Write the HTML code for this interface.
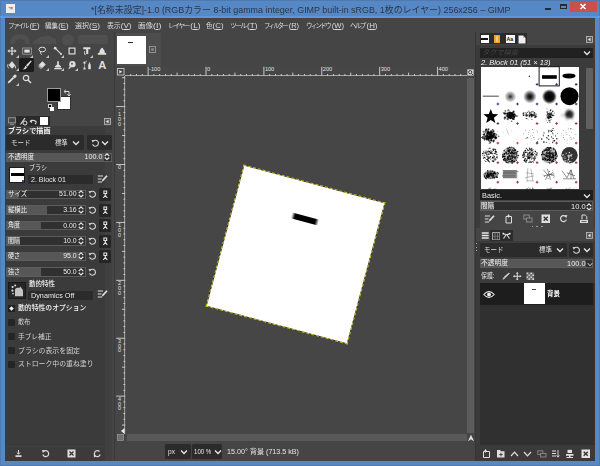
<!DOCTYPE html>
<html lang="ja"><head><meta charset="utf-8"><title>GIMP</title>
<style>
html,body{margin:0;padding:0;}
body{width:600px;height:466px;overflow:hidden;position:relative;background:#5688c5;font-family:"Liberation Sans","Noto Sans CJK JP",sans-serif;}
body>div,body>svg{position:absolute;}
.t{font-family:"Liberation Sans","Noto Sans CJK JP",sans-serif;}
u{text-decoration:underline;text-underline-offset:0.5px;text-decoration-thickness:0.6px;}
</style></head><body>
<div style="left:5.8px;top:4px;width:9.4px;height:9.2px;background:#f2f0ee;"></div>
<svg style="left:6px;top:4px;" width="9" height="9" viewBox="0 0 9 9"><path d="M2 3 Q4.5 2 7 4 L6 6 Q4 5 2 3Z" fill="#b0a4a0"/><circle cx="6" cy="3.6" r="0.8" fill="#d06a5a"/></svg>
<div class="t" style="left:90.5px;top:3.84px;font-size:8.8px;line-height:12.32px;color:#2c3446;font-weight:400;white-space:nowrap;transform:scaleX(1.014);transform-origin:left center;">*[名称未設定]-1.0 (RGBカラー 8-bit gamma integer, GIMP built-in sRGB, 1枚のレイヤー) 256x256 – GIMP</div>
<div style="left:545px;top:8px;width:6px;height:1.6px;background:#2a2a2a;"></div>
<div style="left:559.5px;top:3.5px;width:7px;height:5.5px;background:transparent;border:1px solid #2a2a2a;border-top-width:2px;box-sizing:border-box;"></div>
<div style="left:570px;top:0px;width:26.5px;height:12px;background:#c9504d;"></div>
<svg style="left:578px;top:1.5px;" width="10" height="9" viewBox="0 0 10 9"><path d="M2.5 2 L7.5 7 M7.5 2 L2.5 7" stroke="#fff" stroke-width="1.5"/></svg>
<div style="left:0px;top:0px;width:600px;height:466px;background:transparent;border:1px solid #5079b0;box-sizing:border-box;"></div>
<div style="left:0px;top:16.4px;width:600px;height:1.2px;background:#5b97dc;"></div>
<div style="left:4.6px;top:17.6px;width:590.6px;height:443.6px;background:#3a3c42;"></div>
<div style="left:5px;top:18px;width:590px;height:443px;background:#454545;"></div>
<div style="left:5px;top:18px;width:590px;height:14px;background:#454545;"></div>
<div class="t" style="left:7.5px;top:20.07px;font-size:7.9px;line-height:11.06px;color:#dcdcdc;font-weight:400;white-space:nowrap;transform:scaleX(0.997);transform-origin:left center;"><span style="font-size:6.7px;letter-spacing:-1.75px;margin-right:1.75px;">ファイル</span><span style="font-size:7.9px;">(<u>F</u>)</span></div>
<div class="t" style="left:45px;top:20.07px;font-size:7.9px;line-height:11.06px;color:#dcdcdc;font-weight:400;white-space:nowrap;transform:scaleX(0.982);transform-origin:left center;"><span style="font-size:6.7px;">編集</span><span style="font-size:7.9px;">(<u>E</u>)</span></div>
<div class="t" style="left:75px;top:20.07px;font-size:7.9px;line-height:11.06px;color:#dcdcdc;font-weight:400;white-space:nowrap;transform:scaleX(1.045);transform-origin:left center;"><span style="font-size:6.7px;">選択</span><span style="font-size:7.9px;">(<u>S</u>)</span></div>
<div class="t" style="left:106.5px;top:20.07px;font-size:7.9px;line-height:11.06px;color:#dcdcdc;font-weight:400;white-space:nowrap;transform:scaleX(1.024);transform-origin:left center;"><span style="font-size:6.7px;">表示</span><span style="font-size:7.9px;">(<u>V</u>)</span></div>
<div class="t" style="left:137.5px;top:20.07px;font-size:7.9px;line-height:11.06px;color:#dcdcdc;font-weight:400;white-space:nowrap;transform:scaleX(1.127);transform-origin:left center;"><span style="font-size:6.7px;">画像</span><span style="font-size:7.9px;">(<u>I</u>)</span></div>
<div class="t" style="left:167.5px;top:20.07px;font-size:7.9px;line-height:11.06px;color:#dcdcdc;font-weight:400;white-space:nowrap;transform:scaleX(1.049);transform-origin:left center;"><span style="font-size:6.7px;letter-spacing:-1.75px;margin-right:1.75px;">レイヤー</span><span style="font-size:7.9px;">(<u>L</u>)</span></div>
<div class="t" style="left:206px;top:20.07px;font-size:7.9px;line-height:11.06px;color:#dcdcdc;font-weight:400;white-space:nowrap;transform:scaleX(0.990);transform-origin:left center;"><span style="font-size:6.7px;">色</span><span style="font-size:7.9px;">(<u>C</u>)</span></div>
<div class="t" style="left:230px;top:20.07px;font-size:7.9px;line-height:11.06px;color:#dcdcdc;font-weight:400;white-space:nowrap;transform:scaleX(1.031);transform-origin:left center;"><span style="font-size:6.7px;letter-spacing:-1.75px;margin-right:1.75px;">ツール</span><span style="font-size:7.9px;">(<u>T</u>)</span></div>
<div class="t" style="left:264px;top:20.07px;font-size:7.9px;line-height:11.06px;color:#dcdcdc;font-weight:400;white-space:nowrap;transform:scaleX(0.938);transform-origin:left center;"><span style="font-size:6.7px;letter-spacing:-1.75px;margin-right:1.75px;">フィルター</span><span style="font-size:7.9px;">(<u>R</u>)</span></div>
<div class="t" style="left:306px;top:20.07px;font-size:7.9px;line-height:11.06px;color:#dcdcdc;font-weight:400;white-space:nowrap;transform:scaleX(0.970);transform-origin:left center;"><span style="font-size:6.7px;letter-spacing:-1.75px;margin-right:1.75px;">ウィンドウ</span><span style="font-size:7.9px;">(<u>W</u>)</span></div>
<div class="t" style="left:350px;top:20.07px;font-size:7.9px;line-height:11.06px;color:#dcdcdc;font-weight:400;white-space:nowrap;transform:scaleX(0.998);transform-origin:left center;"><span style="font-size:6.7px;letter-spacing:-1.75px;margin-right:1.75px;">ヘルプ</span><span style="font-size:7.9px;">(<u>H</u>)</span></div>
<svg style="left:8px;top:33px;" width="102" height="12" viewBox="0 0 102 12"><g fill="#4f4f4f"><path d="M2 11 Q2 1 12 1 Q22 1 22 11 L17 11 Q17 6 12 6 Q7 6 7 11Z"/><path d="M24 11 Q30 2 40 3 L48 6 L48 11Z"/><circle cx="40" cy="7" r="4.5"/><circle cx="60" cy="7" r="6"/><rect x="70" y="2" width="30" height="9" rx="2"/></g></svg>
<svg style="left:7.199999999999999px;top:46.3px;" width="10" height="10" viewBox="0 0 12 12"><path d="M6 0.5 L8 3 L6.7 3 L6.7 5.3 L9 5.3 L9 4 L11.5 6 L9 8 L9 6.7 L6.7 6.7 L6.7 9 L8 9 L6 11.5 L4 9 L5.3 9 L5.3 6.7 L3 6.7 L3 8 L0.5 6 L3 4 L3 5.3 L5.3 5.3 L5.3 3 L4 3Z" fill="#dedede"/></svg>
<svg style="left:21.6px;top:46.3px;" width="10" height="10" viewBox="0 0 12 12"><rect x="0.8" y="2.4" width="10.4" height="7.4" fill="none" stroke="#a8a8a8" stroke-width="0.9"/><rect x="2.8" y="4.3" width="6.4" height="3.6" fill="#e4e4e4"/></svg>
<svg style="left:37.2px;top:46.3px;" width="10" height="10" viewBox="0 0 12 12"><ellipse cx="6.3" cy="4.2" rx="4" ry="2.8" fill="none" stroke="#dedede" stroke-width="1.2"/><path d="M4.5 6.5 Q3.5 8.5 5.5 10.5" fill="none" stroke="#dedede" stroke-width="1.1"/></svg>
<svg style="left:52.8px;top:46.3px;" width="10" height="10" viewBox="0 0 12 12"><path d="M2.5 2.5 L9.5 9.5" stroke="#dedede" stroke-width="1.3"/><circle cx="2.6" cy="2.6" r="1.6" fill="#dedede"/><circle cx="9.6" cy="9.6" r="1.2" fill="#dedede"/></svg>
<svg style="left:66.8px;top:46.3px;" width="10" height="10" viewBox="0 0 12 12"><rect x="2.5" y="2.5" width="7" height="7" fill="none" stroke="#dedede" stroke-width="1.4"/></svg>
<svg style="left:82px;top:46.3px;" width="10" height="10" viewBox="0 0 12 12"><path d="M1.5 1.5 H10 V4 H7.5 V9.5 H5 V4 H1.5Z" fill="#dedede"/><path d="M3 6 V10 H5" stroke="#dedede" fill="none" stroke-width="0.9"/></svg>
<svg style="left:97.4px;top:46.3px;" width="10" height="10" viewBox="0 0 12 12"><path d="M1 10.5 H11 V8.5 H9.5 Q9.5 5 7.5 3.5 Q7 1.5 5.5 2.5 Q3 4.5 2.5 8.5 H1Z" fill="#dedede"/></svg>
<svg style="left:7.199999999999999px;top:60.2px;" width="10" height="10" viewBox="0 0 12 12"><path d="M2 6 L6 1.5 L10 6.5 L6 10.5Z" fill="#dedede"/><path d="M9.5 6 Q12 9 10.5 11 Q9 9 9.5 6Z" fill="#dedede"/><path d="M1 5 Q0 8 2 10" stroke="#dedede" fill="none" stroke-width="1"/></svg>
<div style="left:19.400000000000002px;top:58.300000000000004px;width:14.4px;height:13.6px;background:#1c1c1c;border-radius:1.5px;"></div>
<svg style="left:21.6px;top:60.2px;" width="10" height="10" viewBox="0 0 12 12"><path d="M10.6 0.6 L11.6 1.6 L6.6 8 L4.8 6.4Z" fill="#dedede"/><path d="M4.2 6.8 L6.2 8.6 Q5 11.4 0.8 11.4 Q3.2 9.6 4.2 6.8Z" fill="#dedede"/></svg>
<svg style="left:37.2px;top:60.2px;" width="10" height="10" viewBox="0 0 12 12"><path d="M6.5 1.5 L10.5 5.5 L6 10 L2 6Z" fill="#dedede"/><path d="M2 6 L6 10 L4.5 11 L1.5 8Z" fill="#9c9c9c"/></svg>
<svg style="left:52.8px;top:60.2px;" width="10" height="10" viewBox="0 0 12 12"><path d="M5 1.5 H7 V5.5 L9.5 7.5 V9 H2.5 V7.5 L5 5.5Z" fill="#dedede"/><rect x="1.5" y="9.6" width="9" height="1.5" fill="#dedede"/></svg>
<svg style="left:66.8px;top:60.2px;" width="10" height="10" viewBox="0 0 12 12"><circle cx="6.5" cy="5" r="3.8" fill="#dedede"/><path d="M3.5 7 L1.5 11 L4.5 9.5Z" fill="#dedede"/><circle cx="6" cy="4.5" r="1.2" fill="#555"/></svg>
<svg style="left:82px;top:60.2px;" width="10" height="10" viewBox="0 0 12 12"><path d="M3 10.5 V3 Q3 1.5 6 1.5" fill="none" stroke="#dedede" stroke-width="1" stroke-dasharray="1.5 1"/><rect x="1.8" y="9" width="2.4" height="2.4" fill="#dedede"/><rect x="1.8" y="2" width="2.4" height="2.4" fill="#dedede"/><path d="M7.5 5 H10.5 V11 H7.5Z M8.3 5 V3 H9.7 V5" fill="#dedede"/></svg>
<div class="t" style="left:96.4px;top:56.7px;width:12px;text-align:center;font-size:11.2px;line-height:17px;color:#dedede;font-weight:700;">A</div>
<svg style="left:7.199999999999999px;top:74.3px;" width="10" height="10" viewBox="0 0 12 12"><path d="M9.3 0.5 Q12 0.6 11.3 3.2 L9.2 5.4 L6.8 3Z" fill="#dedede"/><path d="M7 3.6 L8.6 5.2 L3.2 10.6 L0.8 11.4 L1.6 9Z" fill="#dedede"/></svg>
<svg style="left:21.6px;top:74.3px;" width="10" height="10" viewBox="0 0 12 12"><circle cx="4.8" cy="4.8" r="3.2" fill="none" stroke="#dedede" stroke-width="1.4"/><path d="M7.2 7.2 L10.8 10.8" stroke="#dedede" stroke-width="1.8"/></svg>
<svg style="left:15.6px;top:54.5px;" width="3" height="3" viewBox="0 0 3 3"><path d="M3 0 V3 H0Z" fill="#c4c4c4"/></svg>
<svg style="left:30.0px;top:54.5px;" width="3" height="3" viewBox="0 0 3 3"><path d="M3 0 V3 H0Z" fill="#c4c4c4"/></svg>
<svg style="left:45.6px;top:54.5px;" width="3" height="3" viewBox="0 0 3 3"><path d="M3 0 V3 H0Z" fill="#c4c4c4"/></svg>
<svg style="left:61.199999999999996px;top:54.5px;" width="3" height="3" viewBox="0 0 3 3"><path d="M3 0 V3 H0Z" fill="#c4c4c4"/></svg>
<svg style="left:90.4px;top:54.5px;" width="3" height="3" viewBox="0 0 3 3"><path d="M3 0 V3 H0Z" fill="#c4c4c4"/></svg>
<svg style="left:15.6px;top:68.4px;" width="3" height="3" viewBox="0 0 3 3"><path d="M3 0 V3 H0Z" fill="#c4c4c4"/></svg>
<svg style="left:45.6px;top:68.4px;" width="3" height="3" viewBox="0 0 3 3"><path d="M3 0 V3 H0Z" fill="#c4c4c4"/></svg>
<svg style="left:61.199999999999996px;top:68.4px;" width="3" height="3" viewBox="0 0 3 3"><path d="M3 0 V3 H0Z" fill="#c4c4c4"/></svg>
<svg style="left:75.2px;top:68.4px;" width="3" height="3" viewBox="0 0 3 3"><path d="M3 0 V3 H0Z" fill="#c4c4c4"/></svg>
<svg style="left:15.6px;top:82.5px;" width="3" height="3" viewBox="0 0 3 3"><path d="M3 0 V3 H0Z" fill="#c4c4c4"/></svg>
<div style="left:56.6px;top:96.3px;width:14px;height:13.6px;background:#ffffff;border:1px solid #2e2e2e;box-sizing:border-box;"></div>
<div style="left:47.4px;top:88.3px;width:14px;height:13.6px;background:#000;border:1px solid #9a9a9a;box-sizing:border-box;"></div>
<svg style="left:63px;top:89px;" width="8" height="8" viewBox="0 0 8 8"><path d="M1 2.5 H6 V7 M2.8 0.8 L1 2.5 L2.8 4.2 M4.3 5.3 L6 7 L7.7 5.3" fill="none" stroke="#d8d8d8" stroke-width="1"/></svg>
<div style="left:47.5px;top:104px;width:4px;height:4px;background:#000;border:0.6px solid #ccc;box-sizing:border-box;"></div>
<div style="left:50px;top:106.5px;width:4px;height:4px;background:#fff;"></div>
<div style="left:5px;top:126px;width:100px;height:335px;background:#3b3b3b;"></div>
<div style="left:105px;top:126px;width:6.8px;height:335px;background:#404040;"></div>
<div style="left:16px;top:116px;width:33.6px;height:10px;background:#2a2a2a;"></div>
<svg style="left:7.8px;top:117px;" width="8" height="8" viewBox="0 0 8 8"><rect x="0.6" y="0.8" width="6.8" height="5" fill="none" stroke="#9c9c9c" stroke-width="0.9"/><path d="M2 7.3 H6" stroke="#9c9c9c" stroke-width="0.9"/></svg>
<svg style="left:18.5px;top:116.5px;" width="9" height="9" viewBox="0 0 9 9"><path d="M1.5 7.5 L6 1" stroke="#e0e0e0" stroke-width="1.2"/><circle cx="6" cy="6" r="2" fill="none" stroke="#e0e0e0" stroke-width="1"/></svg>
<svg style="left:28.5px;top:117px;" width="8" height="8" viewBox="0 0 8 8"><path d="M1.2 4.2 Q4 2.5 7 4.5 Q7.5 6 6 7" fill="none" stroke="#d8d8d8" stroke-width="1.1"/><path d="M0.5 4.4 L3 2.6 L3 6Z" fill="#d8d8d8"/></svg>
<div style="left:40px;top:117.2px;width:8.4px;height:8px;background:#fff;"></div>
<svg style="left:104px;top:117.5px;" width="7" height="7" viewBox="0 0 7 7"><rect x="0.5" y="0.5" width="6" height="6" fill="#5a5a5a" stroke="#bdbdbd" stroke-width="0.8"/><path d="M4.5 1.8 V5.2 L2 3.5Z" fill="#eee"/></svg>
<div class="t" style="left:7.5px;top:125.60px;font-size:7px;line-height:9.80px;color:#f0f0f0;font-weight:700;white-space:nowrap;transform:scaleX(1.015);transform-origin:left center;">ブラシで描画</div>
<div style="left:6px;top:135px;width:77.5px;height:14.5px;background:#2b2b2b;border-radius:1.5px;"></div>
<div class="t" style="left:10.5px;top:137.60px;font-size:7px;line-height:9.80px;color:#dcdcdc;font-weight:400;white-space:nowrap;transform:scaleX(0.929);transform-origin:left center;">モード</div>
<div class="t" style="left:55px;top:137.60px;font-size:7px;line-height:9.80px;color:#e0e0e0;font-weight:400;white-space:nowrap;transform:scaleX(0.893);transform-origin:left center;">標準</div>
<svg style="left:72px;top:139.5px;" width="8" height="6" viewBox="0 0 8 6"><path d="M1 1.5 L4 4.5 L7 1.5" fill="none" stroke="#e8e8e8" stroke-width="1.3"/></svg>
<div style="left:87px;top:135px;width:24.5px;height:14.5px;background:#2b2b2b;border-radius:1.5px;"></div>
<svg style="left:90.5px;top:138.5px;" width="8" height="8" viewBox="0 0 8 8"><path d="M2.2 2.2 A3 3 0 1 1 1.6 5.2" fill="none" stroke="#d4d4d4" stroke-width="1.1"/><path d="M0.6 1 L3.6 1.2 L1.8 3.8Z" fill="#d4d4d4"/></svg>
<svg style="left:100.5px;top:139.5px;" width="8" height="6" viewBox="0 0 8 6"><path d="M1 1.5 L4 4.5 L7 1.5" fill="none" stroke="#e8e8e8" stroke-width="1.3"/></svg>
<div style="left:6px;top:152.5px;width:105.5px;height:9px;background:#303030;border:1px solid #5c5c5c;box-sizing:border-box;"></div>
<div style="left:6.8px;top:153.3px;width:97.5px;height:7.4px;background:#575757;"></div>
<div class="t" style="left:8px;top:151.90px;font-size:7px;line-height:9.80px;color:#f0f0f0;font-weight:400;white-space:nowrap;transform:scaleX(0.929);transform-origin:left center;">不透明度</div>
<div class="t" style="right:497.5px;top:152.10px;font-size:7px;line-height:9.80px;color:#ececec;font-weight:400;white-space:nowrap;transform:scaleX(1.027);transform-origin:right center;">100.0</div>
<svg style="left:103.9px;top:153.3px;" width="6" height="7.4" viewBox="0 0 6 7.4"><path d="M0.7 2.96 L3 0.9 L5.3 2.96 M0.7 4.44 L3 6.50 L5.3 4.44" fill="none" stroke="#e0e0e0" stroke-width="1.25"/></svg>
<div style="left:8.5px;top:166.5px;width:16.8px;height:16.8px;background:#fff;border:1.4px solid #1c1c1c;box-sizing:border-box;"></div>
<div style="left:10.5px;top:173.2px;width:13px;height:3.2px;background:#000;"></div>
<div style="left:21.5px;top:180px;width:2.2px;height:2.2px;background:#3050a0;"></div>
<div class="t" style="left:29px;top:163.30px;font-size:7px;line-height:9.80px;color:#e8e8e8;font-weight:400;white-space:nowrap;transform:scaleX(0.862);transform-origin:left center;">ブラシ</div>
<div style="left:28px;top:174.5px;width:64.5px;height:9.5px;background:#2b2b2b;"></div>
<div class="t" style="left:31px;top:174.60px;font-size:7px;line-height:9.80px;color:#e8e8e8;font-weight:400;white-space:nowrap;transform:scaleX(1.010);transform-origin:left center;">2. Block 01</div>
<svg style="left:97px;top:173.5px;" width="11" height="10" viewBox="0 0 11 10"><path d="M0.8 2 H6 M0.8 5 H4.5 M0.8 8 H5" stroke="#e0e0e0" stroke-width="1.2"/><path d="M4.8 7.8 L5.4 5.6 L9.4 1.2 L10.6 2.3 L6.6 6.8Z" fill="#e0e0e0"/></svg>
<div style="left:6px;top:189.5px;width:79.5px;height:9.5px;background:#303030;border:1px solid #5c5c5c;box-sizing:border-box;"></div>
<div style="left:6.8px;top:190.3px;width:11.7px;height:7.9px;background:#575757;"></div>
<div class="t" style="left:8px;top:189.15px;font-size:7px;line-height:9.80px;color:#f0f0f0;font-weight:400;white-space:nowrap;transform:scaleX(0.933);transform-origin:left center;">サイズ</div>
<div class="t" style="right:523.5px;top:189.35px;font-size:7px;line-height:9.80px;color:#ececec;font-weight:400;white-space:nowrap;transform:scaleX(0.993);transform-origin:right center;">51.00</div>
<svg style="left:77.9px;top:190.3px;" width="6" height="7.9" viewBox="0 0 6 7.9"><path d="M0.7 3.16 L3 0.9 L5.3 3.16 M0.7 4.74 L3 7.00 L5.3 4.74" fill="none" stroke="#e0e0e0" stroke-width="1.25"/></svg>
<svg style="left:88px;top:190.3px;" width="8" height="8" viewBox="0 0 8 8"><path d="M2.2 2.2 A3 3 0 1 1 1.6 5.2" fill="none" stroke="#d4d4d4" stroke-width="1.1"/><path d="M0.6 1 L3.6 1.2 L1.8 3.8Z" fill="#d4d4d4"/></svg>
<div style="left:98.8px;top:187.9px;width:12.5px;height:13px;background:#252525;border-radius:1.5px;"></div>
<svg style="left:101.6px;top:189.9px;" width="6.6" height="8.6" viewBox="0 0 8 10"><path d="M2.3 1 H5.7 V4 H2.3Z" fill="none" stroke="#e4e4e4" stroke-width="1.3"/><path d="M4 4 V6.5 M1.6 9.5 L4 6 L6.4 9.5" fill="none" stroke="#e4e4e4" stroke-width="1.3"/></svg>
<div style="left:6px;top:205.2px;width:79.5px;height:9.5px;background:#303030;border:1px solid #5c5c5c;box-sizing:border-box;"></div>
<div style="left:6.8px;top:206.0px;width:40.2px;height:7.9px;background:#575757;"></div>
<div class="t" style="left:8px;top:204.85px;font-size:7px;line-height:9.80px;color:#f0f0f0;font-weight:400;white-space:nowrap;transform:scaleX(0.905);transform-origin:left center;">縦横比</div>
<div class="t" style="right:523.5px;top:205.05px;font-size:7px;line-height:9.80px;color:#ececec;font-weight:400;white-space:nowrap;transform:scaleX(0.983);transform-origin:right center;">3.16</div>
<svg style="left:77.9px;top:206.0px;" width="6" height="7.9" viewBox="0 0 6 7.9"><path d="M0.7 3.16 L3 0.9 L5.3 3.16 M0.7 4.74 L3 7.00 L5.3 4.74" fill="none" stroke="#e0e0e0" stroke-width="1.25"/></svg>
<svg style="left:88px;top:206.0px;" width="8" height="8" viewBox="0 0 8 8"><path d="M2.2 2.2 A3 3 0 1 1 1.6 5.2" fill="none" stroke="#d4d4d4" stroke-width="1.1"/><path d="M0.6 1 L3.6 1.2 L1.8 3.8Z" fill="#d4d4d4"/></svg>
<div style="left:98.8px;top:203.6px;width:12.5px;height:13px;background:#252525;border-radius:1.5px;"></div>
<svg style="left:101.6px;top:205.6px;" width="6.6" height="8.6" viewBox="0 0 8 10"><path d="M2.3 1 H5.7 V4 H2.3Z" fill="none" stroke="#e4e4e4" stroke-width="1.3"/><path d="M4 4 V6.5 M1.6 9.5 L4 6 L6.4 9.5" fill="none" stroke="#e4e4e4" stroke-width="1.3"/></svg>
<div style="left:6px;top:220.8px;width:79.5px;height:9.5px;background:#303030;border:1px solid #5c5c5c;box-sizing:border-box;"></div>
<div style="left:6.8px;top:221.60000000000002px;width:34.2px;height:7.9px;background:#575757;"></div>
<div class="t" style="left:8px;top:220.45px;font-size:7px;line-height:9.80px;color:#f0f0f0;font-weight:400;white-space:nowrap;transform:scaleX(0.857);transform-origin:left center;">角度</div>
<div class="t" style="right:523.5px;top:220.65px;font-size:7px;line-height:9.80px;color:#ececec;font-weight:400;white-space:nowrap;transform:scaleX(0.983);transform-origin:right center;">0.00</div>
<svg style="left:77.9px;top:221.60000000000002px;" width="6" height="7.9" viewBox="0 0 6 7.9"><path d="M0.7 3.16 L3 0.9 L5.3 3.16 M0.7 4.74 L3 7.00 L5.3 4.74" fill="none" stroke="#e0e0e0" stroke-width="1.25"/></svg>
<svg style="left:88px;top:221.60000000000002px;" width="8" height="8" viewBox="0 0 8 8"><path d="M2.2 2.2 A3 3 0 1 1 1.6 5.2" fill="none" stroke="#d4d4d4" stroke-width="1.1"/><path d="M0.6 1 L3.6 1.2 L1.8 3.8Z" fill="#d4d4d4"/></svg>
<div style="left:98.8px;top:219.20000000000002px;width:12.5px;height:13px;background:#252525;border-radius:1.5px;"></div>
<svg style="left:101.6px;top:221.20000000000002px;" width="6.6" height="8.6" viewBox="0 0 8 10"><path d="M2.3 1 H5.7 V4 H2.3Z" fill="none" stroke="#e4e4e4" stroke-width="1.3"/><path d="M4 4 V6.5 M1.6 9.5 L4 6 L6.4 9.5" fill="none" stroke="#e4e4e4" stroke-width="1.3"/></svg>
<div style="left:6px;top:236.2px;width:79.5px;height:9.5px;background:#303030;border:1px solid #5c5c5c;box-sizing:border-box;"></div>
<div style="left:6.8px;top:237.0px;width:13.7px;height:7.9px;background:#575757;"></div>
<div class="t" style="left:8px;top:235.85px;font-size:7px;line-height:9.80px;color:#f0f0f0;font-weight:400;white-space:nowrap;transform:scaleX(0.857);transform-origin:left center;">間隔</div>
<div class="t" style="right:523.5px;top:236.05px;font-size:7px;line-height:9.80px;color:#ececec;font-weight:400;white-space:nowrap;transform:scaleX(0.983);transform-origin:right center;">10.0</div>
<svg style="left:77.9px;top:237.0px;" width="6" height="7.9" viewBox="0 0 6 7.9"><path d="M0.7 3.16 L3 0.9 L5.3 3.16 M0.7 4.74 L3 7.00 L5.3 4.74" fill="none" stroke="#e0e0e0" stroke-width="1.25"/></svg>
<svg style="left:88px;top:237.0px;" width="8" height="8" viewBox="0 0 8 8"><path d="M2.2 2.2 A3 3 0 1 1 1.6 5.2" fill="none" stroke="#d4d4d4" stroke-width="1.1"/><path d="M0.6 1 L3.6 1.2 L1.8 3.8Z" fill="#d4d4d4"/></svg>
<div style="left:98.8px;top:234.6px;width:12.5px;height:13px;background:#252525;border-radius:1.5px;"></div>
<svg style="left:101.6px;top:236.6px;" width="6.6" height="8.6" viewBox="0 0 8 10"><path d="M2.3 1 H5.7 V4 H2.3Z" fill="none" stroke="#e4e4e4" stroke-width="1.3"/><path d="M4 4 V6.5 M1.6 9.5 L4 6 L6.4 9.5" fill="none" stroke="#e4e4e4" stroke-width="1.3"/></svg>
<div style="left:6px;top:251.6px;width:79.5px;height:9.5px;background:#303030;border:1px solid #5c5c5c;box-sizing:border-box;"></div>
<div style="left:6.8px;top:252.4px;width:73.7px;height:7.9px;background:#575757;"></div>
<div class="t" style="left:8px;top:251.25px;font-size:7px;line-height:9.80px;color:#f0f0f0;font-weight:400;white-space:nowrap;transform:scaleX(0.857);transform-origin:left center;">硬さ</div>
<div class="t" style="right:523.5px;top:251.45px;font-size:7px;line-height:9.80px;color:#ececec;font-weight:400;white-space:nowrap;transform:scaleX(0.983);transform-origin:right center;">95.0</div>
<svg style="left:77.9px;top:252.4px;" width="6" height="7.9" viewBox="0 0 6 7.9"><path d="M0.7 3.16 L3 0.9 L5.3 3.16 M0.7 4.74 L3 7.00 L5.3 4.74" fill="none" stroke="#e0e0e0" stroke-width="1.25"/></svg>
<svg style="left:88px;top:252.4px;" width="8" height="8" viewBox="0 0 8 8"><path d="M2.2 2.2 A3 3 0 1 1 1.6 5.2" fill="none" stroke="#d4d4d4" stroke-width="1.1"/><path d="M0.6 1 L3.6 1.2 L1.8 3.8Z" fill="#d4d4d4"/></svg>
<div style="left:98.8px;top:250.0px;width:12.5px;height:13px;background:#252525;border-radius:1.5px;"></div>
<svg style="left:101.6px;top:252.0px;" width="6.6" height="8.6" viewBox="0 0 8 10"><path d="M2.3 1 H5.7 V4 H2.3Z" fill="none" stroke="#e4e4e4" stroke-width="1.3"/><path d="M4 4 V6.5 M1.6 9.5 L4 6 L6.4 9.5" fill="none" stroke="#e4e4e4" stroke-width="1.3"/></svg>
<div style="left:6px;top:267px;width:79.5px;height:9.5px;background:#303030;border:1px solid #5c5c5c;box-sizing:border-box;"></div>
<div style="left:6.8px;top:267.8px;width:34.2px;height:7.9px;background:#575757;"></div>
<div class="t" style="left:8px;top:266.65px;font-size:7px;line-height:9.80px;color:#f0f0f0;font-weight:400;white-space:nowrap;transform:scaleX(0.857);transform-origin:left center;">強さ</div>
<div class="t" style="right:523.5px;top:266.85px;font-size:7px;line-height:9.80px;color:#ececec;font-weight:400;white-space:nowrap;transform:scaleX(0.983);transform-origin:right center;">50.0</div>
<svg style="left:77.9px;top:267.8px;" width="6" height="7.9" viewBox="0 0 6 7.9"><path d="M0.7 3.16 L3 0.9 L5.3 3.16 M0.7 4.74 L3 7.00 L5.3 4.74" fill="none" stroke="#e0e0e0" stroke-width="1.25"/></svg>
<svg style="left:88px;top:267.8px;" width="8" height="8" viewBox="0 0 8 8"><path d="M2.2 2.2 A3 3 0 1 1 1.6 5.2" fill="none" stroke="#d4d4d4" stroke-width="1.1"/><path d="M0.6 1 L3.6 1.2 L1.8 3.8Z" fill="#d4d4d4"/></svg>
<div style="left:8.2px;top:281.6px;width:18px;height:17.7px;background:#262626;border:1px solid #1a1a1a;box-sizing:border-box;"></div>
<svg style="left:9.5px;top:283px;" width="16" height="15" viewBox="0 0 16 15"><path d="M5 7.5 Q5 4.8 7.5 4.8 L9.5 4.8 L10.8 3.4 L11.4 5.2 Q13 6 13 8 V13.2 H5Z" fill="#c4c4c4"/><circle cx="2.6" cy="4" r="1.1" fill="#dcdcdc"/><circle cx="5.2" cy="2.4" r="1" fill="#dcdcdc"/><circle cx="2.4" cy="7.6" r="1.1" fill="#dcdcdc"/><circle cx="3" cy="10.6" r="0.9" fill="#c8c8c8"/></svg>
<div class="t" style="left:28.6px;top:279.40px;font-size:7px;line-height:9.80px;color:#f0f0f0;font-weight:500;white-space:nowrap;transform:scaleX(0.929);transform-origin:left center;">動的特性</div>
<div style="left:28px;top:290.5px;width:64.5px;height:9.5px;background:#2b2b2b;"></div>
<div class="t" style="left:30.6px;top:290.60px;font-size:7px;line-height:9.80px;color:#e8e8e8;font-weight:400;white-space:nowrap;transform:scaleX(1.036);transform-origin:left center;">Dynamics Off</div>
<svg style="left:97px;top:288.5px;" width="11" height="10" viewBox="0 0 11 10"><path d="M0.8 2 H6 M0.8 5 H4.5 M0.8 8 H5" stroke="#e0e0e0" stroke-width="1.2"/><path d="M4.8 7.8 L5.4 5.6 L9.4 1.2 L10.6 2.3 L6.6 6.8Z" fill="#e0e0e0"/></svg>
<svg style="left:8px;top:305px;" width="7" height="7" viewBox="0 0 7 7"><rect x="0" y="0" width="7" height="7" fill="#222"/><path d="M3.5 1.2 L5.8 3.5 L3.5 5.8 L1.2 3.5Z" fill="#f4f4f4"/></svg>
<div class="t" style="left:17.6px;top:303.40px;font-size:7px;line-height:9.80px;color:#f4f4f4;font-weight:500;white-space:nowrap;transform:scaleX(0.977);transform-origin:left center;">動的特性のオプション</div>
<div style="left:7.6px;top:318.7px;width:7.2px;height:7.2px;background:#252525;border-radius:1.2px;"></div>
<div class="t" style="left:17.6px;top:317.40px;font-size:7px;line-height:9.80px;color:#d2d2d2;font-weight:400;white-space:nowrap;transform:scaleX(0.886);transform-origin:left center;">散布</div>
<div style="left:7.6px;top:332.79999999999995px;width:7.2px;height:7.2px;background:#252525;border-radius:1.2px;"></div>
<div class="t" style="left:17.6px;top:331.50px;font-size:7px;line-height:9.80px;color:#d2d2d2;font-weight:400;white-space:nowrap;transform:scaleX(0.954);transform-origin:left center;">手ブレ補正</div>
<div style="left:7.6px;top:346.79999999999995px;width:7.2px;height:7.2px;background:#252525;border-radius:1.2px;"></div>
<div class="t" style="left:17.6px;top:345.50px;font-size:7px;line-height:9.80px;color:#d2d2d2;font-weight:400;white-space:nowrap;transform:scaleX(0.986);transform-origin:left center;">ブラシの表示を固定</div>
<div style="left:7.6px;top:360.59999999999997px;width:7.2px;height:7.2px;background:#252525;border-radius:1.2px;"></div>
<div class="t" style="left:17.6px;top:359.30px;font-size:7px;line-height:9.80px;color:#d2d2d2;font-weight:400;white-space:nowrap;transform:scaleX(0.982);transform-origin:left center;">ストローク中の重ね塗り</div>
<div style="left:5px;top:445.5px;width:100px;height:0.8px;background:#404040;"></div>
<svg style="left:14px;top:449px;" width="9" height="9" viewBox="0 0 9 9"><path d="M4.5 1 V5 M2.8 3.5 L4.5 5.2 L6.2 3.5" fill="none" stroke="#d8d8d8" stroke-width="1"/><path d="M1.5 8 H7.5 V6.2 H1.5Z" fill="#d8d8d8"/></svg>
<svg style="left:41px;top:449px;" width="9" height="9" viewBox="0 0 9 9"><path d="M2.5 2.5 A3 3 0 1 1 1.8 5.5" fill="none" stroke="#dcdcdc" stroke-width="1.2"/><path d="M0.8 1 L4 1.4 L2 4Z" fill="#dcdcdc"/></svg>
<svg style="left:66.5px;top:449px;" width="9" height="9" viewBox="0 0 9 9"><rect x="0.5" y="0.5" width="8" height="8" fill="#e0e0e0"/><path d="M2.5 2.5 L6.5 6.5 M6.5 2.5 L2.5 6.5" stroke="#333" stroke-width="1.3"/></svg>
<svg style="left:93px;top:449px;" width="9" height="9" viewBox="0 0 9 9"><path d="M6.5 2.5 A3 3 0 1 0 7.2 5.5" fill="none" stroke="#dcdcdc" stroke-width="1.2"/><path d="M3.2 7.2 L1 8.6 L0.8 5.6Z" fill="#dcdcdc"/></svg>
<div style="left:113.5px;top:32px;width:1.2px;height:429px;background:#3a3a3a;"></div>
<div style="left:115px;top:32px;width:361px;height:34px;background:#454545;"></div>
<div style="left:116px;top:32.5px;width:45px;height:33px;background:#4d4d4d;"></div>
<div style="left:117px;top:35.5px;width:28.5px;height:28.5px;background:#fff;"></div>
<div style="left:128.2px;top:42.1px;width:5px;height:1px;background:#2a2a2a;"></div>
<svg style="left:148.5px;top:46px;" width="7" height="7" viewBox="0 0 7 7"><rect x="0.5" y="0.5" width="6" height="6" fill="none" stroke="#9a9a9a" stroke-width="0.9"/><rect x="2.2" y="2.2" width="2.6" height="2.6" fill="#8a8a8a"/></svg>
<div style="left:116px;top:66px;width:351px;height:368px;background:#464646;"></div>
<svg style="left:0px;top:0px;pointer-events:none;" width="600" height="466" viewBox="0 0 600 466"><g fill="#d4d4d4"><rect x="130.28" y="74.00" width="0.9" height="1.8" /><rect x="136.07" y="74.00" width="0.9" height="1.8" /><rect x="141.86" y="74.00" width="0.9" height="1.8" /><rect x="147.65" y="66.80" width="0.9" height="9" /><rect x="153.44" y="74.00" width="0.9" height="1.8" /><rect x="159.23" y="74.00" width="0.9" height="1.8" /><rect x="165.02" y="74.00" width="0.9" height="1.8" /><rect x="170.81" y="74.00" width="0.9" height="1.8" /><rect x="176.60" y="72.60" width="0.9" height="3.2" /><rect x="182.39" y="74.00" width="0.9" height="1.8" /><rect x="188.18" y="74.00" width="0.9" height="1.8" /><rect x="193.97" y="74.00" width="0.9" height="1.8" /><rect x="199.76" y="74.00" width="0.9" height="1.8" /><rect x="205.55" y="66.80" width="0.9" height="9" /><rect x="211.34" y="74.00" width="0.9" height="1.8" /><rect x="217.13" y="74.00" width="0.9" height="1.8" /><rect x="222.92" y="74.00" width="0.9" height="1.8" /><rect x="228.71" y="74.00" width="0.9" height="1.8" /><rect x="234.50" y="72.60" width="0.9" height="3.2" /><rect x="240.29" y="74.00" width="0.9" height="1.8" /><rect x="246.08" y="74.00" width="0.9" height="1.8" /><rect x="251.87" y="74.00" width="0.9" height="1.8" /><rect x="257.66" y="74.00" width="0.9" height="1.8" /><rect x="263.45" y="66.80" width="0.9" height="9" /><rect x="269.24" y="74.00" width="0.9" height="1.8" /><rect x="275.03" y="74.00" width="0.9" height="1.8" /><rect x="280.82" y="74.00" width="0.9" height="1.8" /><rect x="286.61" y="74.00" width="0.9" height="1.8" /><rect x="292.40" y="72.60" width="0.9" height="3.2" /><rect x="298.19" y="74.00" width="0.9" height="1.8" /><rect x="303.98" y="74.00" width="0.9" height="1.8" /><rect x="309.77" y="74.00" width="0.9" height="1.8" /><rect x="315.56" y="74.00" width="0.9" height="1.8" /><rect x="321.35" y="66.80" width="0.9" height="9" /><rect x="327.14" y="74.00" width="0.9" height="1.8" /><rect x="332.93" y="74.00" width="0.9" height="1.8" /><rect x="338.72" y="74.00" width="0.9" height="1.8" /><rect x="344.51" y="74.00" width="0.9" height="1.8" /><rect x="350.30" y="72.60" width="0.9" height="3.2" /><rect x="356.09" y="74.00" width="0.9" height="1.8" /><rect x="361.88" y="74.00" width="0.9" height="1.8" /><rect x="367.67" y="74.00" width="0.9" height="1.8" /><rect x="373.46" y="74.00" width="0.9" height="1.8" /><rect x="379.25" y="66.80" width="0.9" height="9" /><rect x="385.04" y="74.00" width="0.9" height="1.8" /><rect x="390.83" y="74.00" width="0.9" height="1.8" /><rect x="396.62" y="74.00" width="0.9" height="1.8" /><rect x="402.41" y="74.00" width="0.9" height="1.8" /><rect x="408.20" y="72.60" width="0.9" height="3.2" /><rect x="413.99" y="74.00" width="0.9" height="1.8" /><rect x="419.78" y="74.00" width="0.9" height="1.8" /><rect x="425.57" y="74.00" width="0.9" height="1.8" /><rect x="431.36" y="74.00" width="0.9" height="1.8" /><rect x="437.15" y="66.80" width="0.9" height="9" /><rect x="442.94" y="74.00" width="0.9" height="1.8" /><rect x="448.73" y="74.00" width="0.9" height="1.8" /><rect x="454.52" y="74.00" width="0.9" height="1.8" /><rect x="460.31" y="74.00" width="0.9" height="1.8" /><rect x="125" y="75.2" width="342" height="0.8" opacity="0.85"/></g></svg>
<div class="t" style="left:149.1px;top:66.38px;font-size:5.6px;line-height:7.84px;color:#e0e0e0;font-weight:400;white-space:nowrap;">-100</div>
<div class="t" style="left:207px;top:66.38px;font-size:5.6px;line-height:7.84px;color:#e0e0e0;font-weight:400;white-space:nowrap;">0</div>
<div class="t" style="left:264.9px;top:66.38px;font-size:5.6px;line-height:7.84px;color:#e0e0e0;font-weight:400;white-space:nowrap;">100</div>
<div class="t" style="left:322.8px;top:66.38px;font-size:5.6px;line-height:7.84px;color:#e0e0e0;font-weight:400;white-space:nowrap;">200</div>
<div class="t" style="left:380.7px;top:66.38px;font-size:5.6px;line-height:7.84px;color:#e0e0e0;font-weight:400;white-space:nowrap;">300</div>
<div class="t" style="left:438.6px;top:66.38px;font-size:5.6px;line-height:7.84px;color:#e0e0e0;font-weight:400;white-space:nowrap;">400</div>
<svg style="left:0px;top:0px;pointer-events:none;" width="600" height="466" viewBox="0 0 600 466"><g fill="#d4d4d4"><rect x="122.00" y="77.20" width="3.2" height="0.9" /><rect x="123.40" y="82.99" width="1.8" height="0.9" /><rect x="123.40" y="88.78" width="1.8" height="0.9" /><rect x="123.40" y="94.57" width="1.8" height="0.9" /><rect x="123.40" y="100.36" width="1.8" height="0.9" /><rect x="116.20" y="106.15" width="9" height="0.9" /><rect x="123.40" y="111.94" width="1.8" height="0.9" /><rect x="123.40" y="117.73" width="1.8" height="0.9" /><rect x="123.40" y="123.52" width="1.8" height="0.9" /><rect x="123.40" y="129.31" width="1.8" height="0.9" /><rect x="122.00" y="135.10" width="3.2" height="0.9" /><rect x="123.40" y="140.89" width="1.8" height="0.9" /><rect x="123.40" y="146.68" width="1.8" height="0.9" /><rect x="123.40" y="152.47" width="1.8" height="0.9" /><rect x="123.40" y="158.26" width="1.8" height="0.9" /><rect x="116.20" y="164.05" width="9" height="0.9" /><rect x="123.40" y="169.84" width="1.8" height="0.9" /><rect x="123.40" y="175.63" width="1.8" height="0.9" /><rect x="123.40" y="181.42" width="1.8" height="0.9" /><rect x="123.40" y="187.21" width="1.8" height="0.9" /><rect x="122.00" y="193.00" width="3.2" height="0.9" /><rect x="123.40" y="198.79" width="1.8" height="0.9" /><rect x="123.40" y="204.58" width="1.8" height="0.9" /><rect x="123.40" y="210.37" width="1.8" height="0.9" /><rect x="123.40" y="216.16" width="1.8" height="0.9" /><rect x="116.20" y="221.95" width="9" height="0.9" /><rect x="123.40" y="227.74" width="1.8" height="0.9" /><rect x="123.40" y="233.53" width="1.8" height="0.9" /><rect x="123.40" y="239.32" width="1.8" height="0.9" /><rect x="123.40" y="245.11" width="1.8" height="0.9" /><rect x="122.00" y="250.90" width="3.2" height="0.9" /><rect x="123.40" y="256.69" width="1.8" height="0.9" /><rect x="123.40" y="262.48" width="1.8" height="0.9" /><rect x="123.40" y="268.27" width="1.8" height="0.9" /><rect x="123.40" y="274.06" width="1.8" height="0.9" /><rect x="116.20" y="279.85" width="9" height="0.9" /><rect x="123.40" y="285.64" width="1.8" height="0.9" /><rect x="123.40" y="291.43" width="1.8" height="0.9" /><rect x="123.40" y="297.22" width="1.8" height="0.9" /><rect x="123.40" y="303.01" width="1.8" height="0.9" /><rect x="122.00" y="308.80" width="3.2" height="0.9" /><rect x="123.40" y="314.59" width="1.8" height="0.9" /><rect x="123.40" y="320.38" width="1.8" height="0.9" /><rect x="123.40" y="326.17" width="1.8" height="0.9" /><rect x="123.40" y="331.96" width="1.8" height="0.9" /><rect x="116.20" y="337.75" width="9" height="0.9" /><rect x="123.40" y="343.54" width="1.8" height="0.9" /><rect x="123.40" y="349.33" width="1.8" height="0.9" /><rect x="123.40" y="355.12" width="1.8" height="0.9" /><rect x="123.40" y="360.91" width="1.8" height="0.9" /><rect x="122.00" y="366.70" width="3.2" height="0.9" /><rect x="123.40" y="372.49" width="1.8" height="0.9" /><rect x="123.40" y="378.28" width="1.8" height="0.9" /><rect x="123.40" y="384.07" width="1.8" height="0.9" /><rect x="123.40" y="389.86" width="1.8" height="0.9" /><rect x="116.20" y="395.65" width="9" height="0.9" /><rect x="123.40" y="401.44" width="1.8" height="0.9" /><rect x="123.40" y="407.23" width="1.8" height="0.9" /><rect x="123.40" y="413.02" width="1.8" height="0.9" /><rect x="123.40" y="418.81" width="1.8" height="0.9" /><rect x="122.00" y="424.60" width="3.2" height="0.9" /><rect x="123.40" y="430.39" width="1.8" height="0.9" /><rect x="124.3" y="76" width="0.8" height="358" opacity="0.85"/></g></svg>
<div class="t" style="left:117px;top:106.42px;font-size:5.4px;line-height:7.56px;color:#e0e0e0;font-weight:400;white-space:nowrap;width:5px;text-align:center;">-</div>
<div class="t" style="left:117px;top:111.12px;font-size:5.4px;line-height:7.56px;color:#e0e0e0;font-weight:400;white-space:nowrap;width:5px;text-align:center;">1</div>
<div class="t" style="left:117px;top:115.82px;font-size:5.4px;line-height:7.56px;color:#e0e0e0;font-weight:400;white-space:nowrap;width:5px;text-align:center;">0</div>
<div class="t" style="left:117px;top:120.52px;font-size:5.4px;line-height:7.56px;color:#e0e0e0;font-weight:400;white-space:nowrap;width:5px;text-align:center;">0</div>
<div class="t" style="left:117px;top:164.32px;font-size:5.4px;line-height:7.56px;color:#e0e0e0;font-weight:400;white-space:nowrap;width:5px;text-align:center;">0</div>
<div class="t" style="left:117px;top:222.22px;font-size:5.4px;line-height:7.56px;color:#e0e0e0;font-weight:400;white-space:nowrap;width:5px;text-align:center;">1</div>
<div class="t" style="left:117px;top:226.92px;font-size:5.4px;line-height:7.56px;color:#e0e0e0;font-weight:400;white-space:nowrap;width:5px;text-align:center;">0</div>
<div class="t" style="left:117px;top:231.62px;font-size:5.4px;line-height:7.56px;color:#e0e0e0;font-weight:400;white-space:nowrap;width:5px;text-align:center;">0</div>
<div class="t" style="left:117px;top:280.12px;font-size:5.4px;line-height:7.56px;color:#e0e0e0;font-weight:400;white-space:nowrap;width:5px;text-align:center;">2</div>
<div class="t" style="left:117px;top:284.82px;font-size:5.4px;line-height:7.56px;color:#e0e0e0;font-weight:400;white-space:nowrap;width:5px;text-align:center;">0</div>
<div class="t" style="left:117px;top:289.52px;font-size:5.4px;line-height:7.56px;color:#e0e0e0;font-weight:400;white-space:nowrap;width:5px;text-align:center;">0</div>
<div class="t" style="left:117px;top:338.02px;font-size:5.4px;line-height:7.56px;color:#e0e0e0;font-weight:400;white-space:nowrap;width:5px;text-align:center;">3</div>
<div class="t" style="left:117px;top:342.72px;font-size:5.4px;line-height:7.56px;color:#e0e0e0;font-weight:400;white-space:nowrap;width:5px;text-align:center;">0</div>
<div class="t" style="left:117px;top:347.42px;font-size:5.4px;line-height:7.56px;color:#e0e0e0;font-weight:400;white-space:nowrap;width:5px;text-align:center;">0</div>
<div class="t" style="left:117px;top:395.92px;font-size:5.4px;line-height:7.56px;color:#e0e0e0;font-weight:400;white-space:nowrap;width:5px;text-align:center;">4</div>
<div class="t" style="left:117px;top:400.62px;font-size:5.4px;line-height:7.56px;color:#e0e0e0;font-weight:400;white-space:nowrap;width:5px;text-align:center;">0</div>
<div class="t" style="left:117px;top:405.32px;font-size:5.4px;line-height:7.56px;color:#e0e0e0;font-weight:400;white-space:nowrap;width:5px;text-align:center;">0</div>
<svg style="left:117px;top:68px;" width="8" height="8" viewBox="0 0 8 8"><rect x="0.5" y="0.5" width="6.5" height="6.5" fill="none" stroke="#c8c8c8" stroke-width="0.9"/><path d="M2.3 2 L5.2 3.8 L2.3 5.6Z" fill="#e8e8e8"/></svg>
<div style="left:222.50px;top:181.50px;width:145.4px;height:145.4px;background:#fff;transform:rotate(15deg);outline:0.8px dashed #c8c428;box-shadow:0 0 0 0.8px #2c2c30;"></div>
<div style="left:291.10px;top:215.70px;width:27.6px;height:6.2px;transform:rotate(15deg);background:linear-gradient(90deg,rgba(0,0,0,0) 0,#000 13%,#000 87%,rgba(0,0,0,0) 100%);"></div>
<div style="left:467px;top:66px;width:8px;height:368px;background:#454545;"></div>
<div style="left:467px;top:78px;width:7.2px;height:354.5px;background:#5c5c5c;"></div>
<svg style="left:467.3px;top:69px;" width="7" height="7" viewBox="0 0 7 7"><rect x="0.4" y="0.4" width="6.2" height="6.2" fill="#d8d8d8"/><circle cx="3.2" cy="3.2" r="1.6" fill="none" stroke="#333" stroke-width="0.9"/><path d="M4.4 4.4 L6 6" stroke="#333" stroke-width="0.9"/></svg>
<div style="left:116px;top:434px;width:359px;height:7px;background:#454545;"></div>
<div style="left:126.5px;top:434.2px;width:340px;height:6.8px;background:#595959;"></div>
<svg style="left:117.3px;top:434.3px;" width="7" height="7" viewBox="0 0 7 7"><rect x="0.4" y="0.4" width="6" height="6" fill="#707070" stroke="#9a9a9a" stroke-width="0.7"/></svg>
<svg style="left:467px;top:434px;" width="8" height="8" viewBox="0 0 8 8"><path d="M0.8 7.5 L4 0.8 L7.2 7.5 L4 5.2Z" fill="#e0e0e0"/></svg>
<svg style="left:120px;top:428px;" width="5" height="6" viewBox="0 0 5 6"><path d="M4.5 0 L4.5 6 L1 3Z" fill="#e8e8e8"/></svg>
<div style="left:115px;top:441px;width:361px;height:19px;background:#454545;"></div>
<div style="left:164.5px;top:443.6px;width:26.3px;height:15px;background:#2b2b2b;border-radius:1.5px;"></div>
<div class="t" style="left:168px;top:446.50px;font-size:7px;line-height:9.80px;color:#e4e4e4;font-weight:400;white-space:nowrap;transform:scaleX(0.945);transform-origin:left center;">px</div>
<svg style="left:179.5px;top:448.5px;" width="8" height="6" viewBox="0 0 8 6"><path d="M1 1.5 L4 4.5 L7 1.5" fill="none" stroke="#e8e8e8" stroke-width="1.3"/></svg>
<div style="left:192.3px;top:443.6px;width:30px;height:15px;background:#2b2b2b;border-radius:1.5px;"></div>
<div class="t" style="left:194px;top:446.78px;font-size:6.6px;line-height:9.24px;color:#e4e4e4;font-weight:400;white-space:nowrap;transform:scaleX(0.925);transform-origin:left center;">100 %</div>
<svg style="left:213.5px;top:448.5px;" width="8" height="6" viewBox="0 0 8 6"><path d="M1 1.5 L4 4.5 L7 1.5" fill="none" stroke="#e8e8e8" stroke-width="1.3"/></svg>
<div class="t" style="left:227px;top:446.50px;font-size:7px;line-height:9.80px;color:#e6e6e6;font-weight:400;white-space:nowrap;transform:scaleX(1.021);transform-origin:left center;">15.00° 背景 (713.5 kB)</div>
<div style="left:474.6px;top:32px;width:1.4px;height:429px;background:#353535;"></div>
<div style="left:476px;top:44.5px;width:119px;height:183px;background:#3b3b3b;"></div>
<div style="left:476px;top:241px;width:119px;height:220px;background:#3b3b3b;"></div>
<div style="left:476.2px;top:243px;width:1.3px;height:1.3px;background:#aaa;"></div>
<div style="left:476.2px;top:246.5px;width:1.3px;height:1.3px;background:#aaa;"></div>
<div style="left:476.2px;top:250px;width:1.3px;height:1.3px;background:#aaa;"></div>
<div style="left:479.5px;top:33.3px;width:47.5px;height:11.2px;background:#2b2b2b;"></div>
<div style="left:480.5px;top:34.5px;width:8.5px;height:8.8px;background:#fff;"></div>
<div style="left:481.2px;top:37.6px;width:7px;height:2.2px;background:#111;"></div>
<div style="left:493.6px;top:34.5px;width:6.8px;height:8.8px;background:#f0a030;"></div>
<div style="left:496px;top:35.5px;width:1.6px;height:6.5px;background:#f8c870;"></div>
<div style="left:506px;top:34.5px;width:8.5px;height:8.8px;background:#f4f4f4;"></div>
<div class="t" style="left:506.6px;top:35.56px;font-size:5.2px;line-height:7.28px;color:#111;font-weight:700;white-space:nowrap;">Aa</div>
<svg style="left:517.5px;top:34.5px;" width="8" height="9" viewBox="0 0 8 9"><path d="M0.5 0.5 H5 L7.5 3 V8.5 H0.5Z" fill="#f0f0f0"/><path d="M5 0.5 V3 H7.5Z" fill="#bbb"/></svg>
<svg style="left:585.7px;top:36px;" width="7" height="7" viewBox="0 0 7 7"><rect x="0.5" y="0.5" width="6" height="6" fill="#5a5a5a" stroke="#bdbdbd" stroke-width="0.8"/><path d="M4.5 1.8 V5.2 L2 3.5Z" fill="#eee"/></svg>
<div style="left:480px;top:48px;width:112.7px;height:9.6px;background:#212121;"></div>
<div class="t" style="left:482px;top:47.90px;font-size:7px;line-height:9.80px;color:#464646;font-weight:400;white-space:nowrap;font-style:italic;transform:scaleX(1.029);transform-origin:left center;">タグで検索</div>
<svg style="left:583px;top:50px;" width="8" height="6" viewBox="0 0 8 6"><path d="M1 1.5 L4 4.5 L7 1.5" fill="none" stroke="#e8e8e8" stroke-width="1.3"/></svg>
<div class="t" style="left:480.5px;top:57.70px;font-size:7px;line-height:9.80px;color:#f0f0f0;font-weight:400;white-space:nowrap;font-style:italic;transform:scaleX(1.073);transform-origin:left center;">2. Block 01 (51 × 13)</div>
<div style="left:481px;top:67.3px;width:98.3px;height:122.2px;background:#fff;"></div>
<svg style="left:0px;top:0px;pointer-events:none;" width="600" height="466" viewBox="0 0 600 466"><defs><radialGradient id="s1"><stop offset="0" stop-color="#000" stop-opacity="0.85"/><stop offset="0.35" stop-color="#000" stop-opacity="0.5"/><stop offset="1" stop-color="#000" stop-opacity="0"/></radialGradient><radialGradient id="s2"><stop offset="0" stop-color="#000" stop-opacity="1"/><stop offset="0.4" stop-color="#000" stop-opacity="0.75"/><stop offset="1" stop-color="#000" stop-opacity="0"/></radialGradient><radialGradient id="s3"><stop offset="0" stop-color="#000" stop-opacity="1"/><stop offset="0.6" stop-color="#000" stop-opacity="0.92"/><stop offset="1" stop-color="#000" stop-opacity="0"/></radialGradient><filter id="bl"><feGaussianBlur stdDeviation="0.9"/></filter><filter id="bl3"><feGaussianBlur stdDeviation="0.65"/></filter><filter id="bl2"><feGaussianBlur stdDeviation="0.45"/></filter></defs><circle cx="529.375" cy="76.275" r="0.7" fill="#222"/><rect x="542.0" y="75.2" width="14.8" height="3.6" fill="#000" filter="url(#bl2)"/><rect x="539.1" y="66.7" width="20.2" height="19.2" fill="none" stroke="#1a1a1a" stroke-width="1"/><ellipse cx="568.975" cy="75.875" rx="6.6" ry="2.5" fill="#000" filter="url(#bl3)"/><rect x="482.775" y="95.7" width="16" height="0.9" fill="#333"/><circle cx="510.325" cy="96.625" r="6" fill="url(#s1)"/><circle cx="529.875" cy="96.625" r="6.8" fill="url(#s2)"/><circle cx="549.425" cy="96.625" r="7.6" fill="url(#s3)"/><circle cx="569.475" cy="96.125" r="9" fill="#000"/><polygon points="490.8,108.9 492.7,114.0 498.2,114.3 493.9,117.7 495.4,123.0 490.8,120.0 486.2,123.0 487.6,117.7 483.4,114.3 488.8,114.0" fill="#000"/><g fill="#000" filter="url(#bl2)"><circle cx="510.325" cy="115.175" r="3.4" opacity="0.75"/><circle cx="509.6" cy="116.4" r="0.92" opacity="0.44"/><circle cx="507.6" cy="114.6" r="0.45" opacity="0.65"/><circle cx="513.4" cy="115.8" r="0.46" opacity="0.45"/><circle cx="505.5" cy="117.3" r="0.50" opacity="0.51"/><circle cx="505.4" cy="110.9" r="0.86" opacity="0.60"/><circle cx="511.2" cy="115.1" r="1.09" opacity="0.54"/><circle cx="511.2" cy="116.2" r="0.65" opacity="0.81"/><circle cx="512.0" cy="118.1" r="0.91" opacity="0.59"/><circle cx="509.3" cy="114.9" r="0.45" opacity="0.50"/><circle cx="509.0" cy="112.8" r="0.65" opacity="0.69"/><circle cx="508.0" cy="115.8" r="1.04" opacity="0.75"/><circle cx="510.5" cy="118.4" r="0.82" opacity="0.84"/><circle cx="510.0" cy="113.2" r="1.18" opacity="0.46"/><circle cx="506.0" cy="117.2" r="0.52" opacity="0.64"/><circle cx="514.5" cy="116.1" r="1.01" opacity="0.69"/><circle cx="512.1" cy="113.7" r="0.96" opacity="0.70"/><circle cx="507.5" cy="113.9" r="1.07" opacity="0.87"/><circle cx="506.1" cy="115.8" r="0.45" opacity="0.75"/><circle cx="511.4" cy="113.4" r="0.71" opacity="0.73"/><circle cx="513.5" cy="115.6" r="0.53" opacity="0.46"/><circle cx="515.0" cy="116.7" r="0.50" opacity="0.52"/><circle cx="505.7" cy="118.3" r="0.46" opacity="0.62"/><circle cx="504.6" cy="113.6" r="1.06" opacity="0.83"/><circle cx="509.8" cy="117.7" r="0.69" opacity="0.84"/><circle cx="511.9" cy="114.8" r="0.54" opacity="0.52"/><circle cx="510.7" cy="118.0" r="0.87" opacity="0.53"/><circle cx="513.4" cy="115.2" r="0.70" opacity="0.68"/><circle cx="514.6" cy="114.1" r="0.81" opacity="0.71"/><circle cx="509.9" cy="114.4" r="1.12" opacity="0.79"/><circle cx="514.0" cy="112.0" r="0.71" opacity="0.60"/><circle cx="513.6" cy="117.3" r="0.45" opacity="0.43"/><circle cx="510.8" cy="116.6" r="0.67" opacity="0.43"/><circle cx="512.0" cy="115.2" r="0.48" opacity="0.58"/><circle cx="516.2" cy="116.0" r="0.89" opacity="0.47"/><circle cx="510.3" cy="117.5" r="0.69" opacity="0.46"/><circle cx="507.0" cy="115.8" r="0.47" opacity="0.45"/><circle cx="509.1" cy="116.8" r="1.06" opacity="0.48"/><circle cx="517.4" cy="116.1" r="0.82" opacity="0.47"/><circle cx="509.7" cy="115.0" r="0.82" opacity="0.89"/><circle cx="513.3" cy="112.3" r="0.61" opacity="0.58"/><circle cx="512.8" cy="118.9" r="0.83" opacity="0.79"/><circle cx="509.3" cy="116.7" r="1.05" opacity="0.89"/><circle cx="513.5" cy="111.6" r="1.05" opacity="0.77"/><circle cx="510.8" cy="118.1" r="0.68" opacity="0.41"/><circle cx="512.7" cy="115.5" r="0.61" opacity="0.75"/><circle cx="513.4" cy="114.4" r="1.15" opacity="0.89"/><circle cx="513.0" cy="114.5" r="0.58" opacity="0.51"/><circle cx="511.0" cy="116.8" r="0.90" opacity="0.85"/><circle cx="512.1" cy="112.8" r="0.92" opacity="0.80"/><circle cx="514.0" cy="117.0" r="1.13" opacity="0.79"/><circle cx="510.3" cy="112.4" r="0.54" opacity="0.79"/><circle cx="507.7" cy="119.0" r="1.18" opacity="0.60"/><circle cx="504.6" cy="118.7" r="0.98" opacity="0.49"/><circle cx="511.5" cy="116.2" r="1.12" opacity="0.80"/><circle cx="513.6" cy="118.9" r="1.18" opacity="0.73"/><circle cx="508.1" cy="117.7" r="0.50" opacity="0.41"/><circle cx="514.5" cy="114.5" r="0.82" opacity="0.87"/><circle cx="504.9" cy="117.2" r="1.06" opacity="0.51"/><circle cx="510.3" cy="117.2" r="0.59" opacity="0.69"/><circle cx="510.1" cy="117.7" r="0.50" opacity="0.86"/><circle cx="508.4" cy="117.4" r="0.87" opacity="0.85"/><circle cx="504.6" cy="117.8" r="0.80" opacity="0.67"/><circle cx="509.8" cy="115.1" r="0.75" opacity="0.49"/><circle cx="515.6" cy="115.3" r="0.54" opacity="0.64"/><circle cx="509.7" cy="112.1" r="0.66" opacity="0.66"/><circle cx="505.5" cy="113.7" r="0.48" opacity="0.68"/><circle cx="510.3" cy="117.2" r="1.02" opacity="0.65"/><circle cx="505.8" cy="113.6" r="1.13" opacity="0.62"/><circle cx="507.7" cy="113.3" r="0.81" opacity="0.75"/><circle cx="506.9" cy="116.1" r="0.78" opacity="0.87"/><circle cx="508.4" cy="110.4" r="1.15" opacity="0.53"/><circle cx="503.8" cy="113.0" r="1.07" opacity="0.47"/><circle cx="512.6" cy="117.0" r="0.46" opacity="0.52"/><circle cx="514.2" cy="116.8" r="1.03" opacity="0.85"/><circle cx="512.9" cy="118.4" r="0.93" opacity="0.47"/><circle cx="511.7" cy="121.2" r="0.72" opacity="0.64"/><circle cx="515.8" cy="114.9" r="0.53" opacity="0.62"/><circle cx="507.7" cy="115.0" r="0.56" opacity="0.56"/><circle cx="510.2" cy="114.7" r="0.84" opacity="0.62"/><circle cx="512.9" cy="115.4" r="0.90" opacity="0.66"/><circle cx="512.1" cy="116.4" r="0.43" opacity="0.79"/><circle cx="510.1" cy="116.5" r="0.74" opacity="0.86"/><circle cx="511.3" cy="113.4" r="0.52" opacity="0.86"/><circle cx="506.2" cy="113.5" r="0.47" opacity="0.43"/><circle cx="509.2" cy="112.8" r="0.46" opacity="0.87"/></g><g fill="#000" filter="url(#bl2)"><circle cx="525.8" cy="112.5" r="0.40" opacity="0.83"/><circle cx="536.0" cy="116.8" r="0.60" opacity="0.57"/><circle cx="522.6" cy="113.7" r="0.50" opacity="0.46"/><circle cx="527.4" cy="114.9" r="0.41" opacity="0.48"/><circle cx="532.0" cy="115.6" r="0.52" opacity="0.55"/><circle cx="530.0" cy="113.5" r="0.63" opacity="0.49"/><circle cx="529.5" cy="115.5" r="0.49" opacity="0.41"/><circle cx="529.4" cy="112.6" r="0.45" opacity="0.64"/><circle cx="531.3" cy="114.8" r="0.80" opacity="0.62"/><circle cx="523.5" cy="115.3" r="0.57" opacity="0.65"/><circle cx="526.4" cy="118.4" r="0.74" opacity="0.72"/><circle cx="527.3" cy="116.2" r="0.38" opacity="0.46"/><circle cx="534.9" cy="116.6" r="0.49" opacity="0.48"/><circle cx="535.5" cy="117.1" r="0.83" opacity="0.74"/><circle cx="529.4" cy="116.7" r="0.51" opacity="0.63"/><circle cx="531.9" cy="117.0" r="0.49" opacity="0.88"/><circle cx="534.1" cy="114.7" r="0.48" opacity="0.88"/><circle cx="528.7" cy="116.9" r="0.35" opacity="0.59"/><circle cx="525.9" cy="115.6" r="0.46" opacity="0.65"/><circle cx="532.5" cy="115.2" r="0.40" opacity="0.60"/><circle cx="530.6" cy="115.3" r="0.52" opacity="0.52"/><circle cx="526.3" cy="113.9" r="0.76" opacity="0.73"/><circle cx="528.4" cy="111.1" r="0.56" opacity="0.56"/><circle cx="531.8" cy="115.1" r="0.75" opacity="0.72"/><circle cx="536.0" cy="116.2" r="0.84" opacity="0.71"/><circle cx="529.2" cy="111.5" r="0.43" opacity="0.66"/><circle cx="523.5" cy="115.1" r="0.79" opacity="0.81"/><circle cx="523.7" cy="113.0" r="0.73" opacity="0.75"/><circle cx="530.0" cy="115.7" r="0.42" opacity="0.58"/><circle cx="534.9" cy="117.5" r="0.66" opacity="0.71"/><circle cx="526.3" cy="113.0" r="0.62" opacity="0.40"/><circle cx="531.5" cy="112.0" r="0.63" opacity="0.67"/><circle cx="529.2" cy="114.5" r="0.76" opacity="0.53"/><circle cx="532.2" cy="115.9" r="0.75" opacity="0.50"/><circle cx="526.6" cy="115.3" r="0.61" opacity="0.74"/><circle cx="530.4" cy="112.4" r="0.70" opacity="0.44"/><circle cx="531.4" cy="116.4" r="0.76" opacity="0.55"/><circle cx="529.4" cy="115.0" r="0.38" opacity="0.53"/><circle cx="527.4" cy="112.4" r="0.72" opacity="0.55"/><circle cx="526.1" cy="114.9" r="0.61" opacity="0.46"/><circle cx="531.6" cy="114.3" r="0.89" opacity="0.87"/><circle cx="533.6" cy="115.4" r="0.80" opacity="0.88"/><circle cx="527.3" cy="115.7" r="0.47" opacity="0.87"/><circle cx="531.0" cy="117.8" r="0.43" opacity="0.66"/><circle cx="531.6" cy="114.9" r="0.80" opacity="0.65"/><circle cx="533.9" cy="113.1" r="0.48" opacity="0.85"/><circle cx="529.1" cy="115.2" r="0.35" opacity="0.65"/><circle cx="527.1" cy="115.7" r="0.43" opacity="0.57"/><circle cx="527.3" cy="118.7" r="0.35" opacity="0.78"/><circle cx="530.8" cy="114.3" r="0.86" opacity="0.76"/><circle cx="532.2" cy="114.2" r="0.55" opacity="0.60"/><circle cx="534.4" cy="115.2" r="0.55" opacity="0.61"/><circle cx="529.7" cy="115.8" r="0.41" opacity="0.82"/><circle cx="528.1" cy="119.8" r="0.49" opacity="0.53"/><circle cx="527.7" cy="115.1" r="0.56" opacity="0.88"/><circle cx="534.5" cy="112.7" r="0.70" opacity="0.86"/><circle cx="533.8" cy="114.2" r="0.75" opacity="0.42"/><circle cx="529.5" cy="113.0" r="0.76" opacity="0.72"/><circle cx="529.6" cy="115.8" r="0.86" opacity="0.46"/><circle cx="526.8" cy="115.5" r="0.51" opacity="0.77"/><circle cx="532.5" cy="114.9" r="0.71" opacity="0.55"/><circle cx="526.7" cy="114.5" r="0.44" opacity="0.48"/><circle cx="531.8" cy="119.4" r="0.62" opacity="0.51"/><circle cx="528.1" cy="115.5" r="0.46" opacity="0.45"/><circle cx="529.1" cy="115.9" r="0.48" opacity="0.53"/><circle cx="523.5" cy="113.4" r="0.76" opacity="0.61"/><circle cx="526.3" cy="116.4" r="0.56" opacity="0.57"/><circle cx="532.4" cy="115.8" r="0.88" opacity="0.46"/><circle cx="525.1" cy="115.1" r="0.82" opacity="0.51"/><circle cx="529.5" cy="116.7" r="0.57" opacity="0.62"/><circle cx="536.2" cy="114.1" r="0.83" opacity="0.41"/><circle cx="535.1" cy="115.8" r="0.84" opacity="0.64"/><circle cx="529.8" cy="115.2" r="0.57" opacity="0.86"/><circle cx="532.9" cy="111.6" r="0.88" opacity="0.52"/><circle cx="531.4" cy="115.9" r="0.64" opacity="0.74"/><circle cx="534.9" cy="114.0" r="0.71" opacity="0.78"/><circle cx="525.8" cy="115.9" r="0.37" opacity="0.79"/></g><g fill="#000" filter="url(#bl2)"><circle cx="549.9" cy="122.2" r="0.71" opacity="0.55"/><circle cx="550.5" cy="116.9" r="0.70" opacity="0.75"/><circle cx="550.0" cy="116.0" r="0.64" opacity="0.69"/><circle cx="548.3" cy="116.6" r="0.68" opacity="0.41"/><circle cx="548.7" cy="118.5" r="0.88" opacity="0.72"/><circle cx="551.1" cy="112.8" r="0.48" opacity="0.52"/><circle cx="552.5" cy="114.0" r="0.52" opacity="0.41"/><circle cx="546.4" cy="115.2" r="0.58" opacity="0.53"/><circle cx="547.1" cy="108.9" r="0.47" opacity="0.42"/><circle cx="548.3" cy="118.0" r="0.73" opacity="0.50"/><circle cx="550.4" cy="110.2" r="0.63" opacity="0.50"/><circle cx="551.1" cy="114.7" r="0.80" opacity="0.52"/><circle cx="550.0" cy="120.4" r="0.51" opacity="0.88"/><circle cx="548.1" cy="115.2" r="0.47" opacity="0.61"/><circle cx="546.9" cy="108.6" r="0.43" opacity="0.60"/><circle cx="549.8" cy="116.0" r="0.38" opacity="0.60"/><circle cx="552.8" cy="111.3" r="0.75" opacity="0.90"/><circle cx="551.1" cy="114.0" r="0.45" opacity="0.87"/><circle cx="549.4" cy="114.4" r="0.72" opacity="0.59"/><circle cx="548.1" cy="117.2" r="0.44" opacity="0.40"/><circle cx="549.1" cy="118.1" r="0.88" opacity="0.46"/><circle cx="550.8" cy="114.7" r="0.55" opacity="0.81"/><circle cx="550.4" cy="112.2" r="0.38" opacity="0.64"/><circle cx="546.3" cy="120.2" r="0.46" opacity="0.58"/><circle cx="549.8" cy="114.7" r="0.58" opacity="0.81"/><circle cx="549.5" cy="114.3" r="0.37" opacity="0.43"/><circle cx="550.8" cy="114.0" r="0.76" opacity="0.85"/><circle cx="548.6" cy="117.3" r="0.88" opacity="0.71"/><circle cx="549.2" cy="120.2" r="0.52" opacity="0.54"/><circle cx="552.8" cy="115.3" r="0.85" opacity="0.72"/><circle cx="549.8" cy="114.9" r="0.48" opacity="0.64"/><circle cx="554.3" cy="113.1" r="0.56" opacity="0.53"/><circle cx="547.3" cy="116.7" r="0.86" opacity="0.49"/><circle cx="550.5" cy="110.3" r="0.80" opacity="0.79"/><circle cx="548.0" cy="113.4" r="0.53" opacity="0.58"/><circle cx="549.6" cy="113.9" r="0.46" opacity="0.78"/><circle cx="549.4" cy="116.3" r="0.37" opacity="0.68"/><circle cx="549.3" cy="116.5" r="0.40" opacity="0.65"/><circle cx="548.9" cy="111.9" r="0.48" opacity="0.61"/><circle cx="547.2" cy="111.9" r="0.76" opacity="0.82"/><circle cx="548.9" cy="113.8" r="0.81" opacity="0.55"/><circle cx="547.6" cy="113.9" r="0.76" opacity="0.50"/><circle cx="549.4" cy="117.5" r="0.43" opacity="0.84"/><circle cx="547.8" cy="113.9" r="0.57" opacity="0.90"/><circle cx="548.0" cy="115.1" r="0.79" opacity="0.73"/><circle cx="550.4" cy="115.1" r="0.61" opacity="0.81"/><circle cx="551.8" cy="109.3" r="0.37" opacity="0.55"/><circle cx="550.4" cy="116.6" r="0.89" opacity="0.69"/><circle cx="551.2" cy="113.9" r="0.83" opacity="0.62"/><circle cx="549.2" cy="120.6" r="0.87" opacity="0.45"/><circle cx="547.1" cy="112.7" r="0.47" opacity="0.58"/><circle cx="550.3" cy="116.8" r="0.49" opacity="0.70"/><circle cx="548.6" cy="113.4" r="0.36" opacity="0.56"/><circle cx="548.9" cy="113.4" r="0.52" opacity="0.50"/><circle cx="550.1" cy="111.4" r="0.38" opacity="0.45"/><circle cx="547.4" cy="117.6" r="0.70" opacity="0.45"/><circle cx="551.0" cy="119.3" r="0.58" opacity="0.54"/><circle cx="547.7" cy="122.5" r="0.52" opacity="0.68"/><circle cx="548.1" cy="117.7" r="0.83" opacity="0.90"/><circle cx="548.5" cy="116.8" r="0.75" opacity="0.50"/><circle cx="553.8" cy="115.4" r="0.58" opacity="0.81"/><circle cx="545.9" cy="118.8" r="0.60" opacity="0.48"/><circle cx="552.0" cy="115.5" r="0.70" opacity="0.85"/><circle cx="551.8" cy="117.5" r="0.55" opacity="0.65"/><circle cx="550.4" cy="117.2" r="0.64" opacity="0.86"/><circle cx="551.2" cy="117.5" r="0.79" opacity="0.88"/><circle cx="549.8" cy="116.7" r="0.87" opacity="0.89"/><circle cx="548.8" cy="115.3" r="0.86" opacity="0.59"/><circle cx="551.7" cy="112.7" r="0.80" opacity="0.48"/><circle cx="549.7" cy="113.0" r="0.57" opacity="0.82"/><circle cx="550.0" cy="113.4" r="0.47" opacity="0.60"/><circle cx="547.4" cy="114.8" r="0.42" opacity="0.52"/></g><g fill="#000" filter="url(#bl)"><circle cx="569.475" cy="114.175" r="4.2" opacity="0.75"/><circle cx="568.1" cy="109.5" r="0.42" opacity="0.52"/><circle cx="569.0" cy="114.4" r="0.90" opacity="0.35"/><circle cx="566.2" cy="113.2" r="0.78" opacity="0.42"/><circle cx="565.8" cy="116.9" r="0.66" opacity="0.56"/><circle cx="566.2" cy="116.1" r="0.41" opacity="0.55"/><circle cx="567.0" cy="115.3" r="0.86" opacity="0.61"/><circle cx="567.3" cy="115.6" r="0.68" opacity="0.34"/><circle cx="571.0" cy="117.2" r="0.46" opacity="0.48"/><circle cx="568.2" cy="115.1" r="0.78" opacity="0.33"/><circle cx="568.5" cy="110.5" r="0.71" opacity="0.32"/><circle cx="566.3" cy="115.1" r="0.97" opacity="0.35"/><circle cx="568.4" cy="110.2" r="0.52" opacity="0.69"/><circle cx="562.2" cy="115.5" r="0.95" opacity="0.37"/><circle cx="570.5" cy="109.1" r="0.44" opacity="0.44"/><circle cx="569.0" cy="113.6" r="0.94" opacity="0.41"/><circle cx="569.6" cy="113.8" r="0.70" opacity="0.67"/><circle cx="569.5" cy="117.2" r="0.70" opacity="0.43"/><circle cx="570.6" cy="115.6" r="0.50" opacity="0.67"/><circle cx="566.5" cy="110.0" r="0.50" opacity="0.61"/><circle cx="571.5" cy="117.4" r="0.78" opacity="0.44"/><circle cx="571.4" cy="112.7" r="0.75" opacity="0.65"/><circle cx="567.1" cy="113.2" r="0.88" opacity="0.41"/><circle cx="572.5" cy="115.0" r="0.62" opacity="0.61"/><circle cx="567.4" cy="115.8" r="0.85" opacity="0.32"/><circle cx="569.9" cy="113.3" r="0.78" opacity="0.69"/><circle cx="565.6" cy="113.1" r="0.59" opacity="0.30"/><circle cx="570.5" cy="115.5" r="0.77" opacity="0.47"/><circle cx="563.3" cy="114.7" r="0.48" opacity="0.39"/><circle cx="568.6" cy="114.7" r="0.40" opacity="0.44"/><circle cx="571.0" cy="116.7" r="0.53" opacity="0.53"/><circle cx="567.4" cy="114.2" r="0.77" opacity="0.49"/><circle cx="573.2" cy="119.9" r="0.55" opacity="0.36"/><circle cx="572.1" cy="117.4" r="0.92" opacity="0.61"/><circle cx="567.2" cy="116.4" r="0.41" opacity="0.56"/><circle cx="566.7" cy="114.2" r="0.79" opacity="0.48"/><circle cx="573.0" cy="113.5" r="0.55" opacity="0.66"/><circle cx="572.2" cy="116.1" r="0.64" opacity="0.40"/><circle cx="573.4" cy="116.9" r="0.41" opacity="0.52"/><circle cx="570.4" cy="114.6" r="0.52" opacity="0.54"/><circle cx="565.1" cy="115.0" r="0.89" opacity="0.37"/><circle cx="568.1" cy="117.3" r="0.43" opacity="0.66"/><circle cx="569.9" cy="111.0" r="0.40" opacity="0.64"/><circle cx="568.9" cy="112.2" r="0.85" opacity="0.48"/><circle cx="569.2" cy="116.4" r="0.54" opacity="0.32"/><circle cx="566.7" cy="119.0" r="0.82" opacity="0.64"/><circle cx="568.5" cy="113.1" r="0.73" opacity="0.47"/><circle cx="569.8" cy="112.0" r="0.56" opacity="0.56"/><circle cx="570.8" cy="114.8" r="0.93" opacity="0.31"/></g><g fill="#000" filter="url(#bl2)"><circle cx="489.775" cy="135.725" r="3.8" opacity="0.7"/><circle cx="489.6" cy="138.0" r="1.00" opacity="0.87"/><circle cx="489.7" cy="132.9" r="1.10" opacity="0.56"/><circle cx="490.3" cy="142.6" r="0.90" opacity="0.75"/><circle cx="483.0" cy="136.9" r="0.96" opacity="0.83"/><circle cx="484.4" cy="137.7" r="0.86" opacity="0.55"/><circle cx="491.0" cy="140.0" r="0.46" opacity="0.86"/><circle cx="490.3" cy="136.3" r="0.49" opacity="0.86"/><circle cx="488.7" cy="137.2" r="0.42" opacity="0.42"/><circle cx="488.0" cy="131.5" r="0.96" opacity="0.77"/><circle cx="494.2" cy="137.4" r="0.69" opacity="0.81"/><circle cx="493.0" cy="129.7" r="0.45" opacity="0.83"/><circle cx="497.2" cy="131.8" r="0.49" opacity="0.50"/><circle cx="490.5" cy="136.3" r="1.08" opacity="0.81"/><circle cx="485.3" cy="131.3" r="0.91" opacity="0.54"/><circle cx="491.1" cy="136.6" r="1.01" opacity="0.50"/><circle cx="488.2" cy="138.7" r="0.42" opacity="0.53"/><circle cx="488.6" cy="140.6" r="0.69" opacity="0.56"/><circle cx="493.9" cy="134.9" r="1.08" opacity="0.71"/><circle cx="493.4" cy="136.4" r="0.75" opacity="0.79"/><circle cx="486.6" cy="139.8" r="0.83" opacity="0.51"/><circle cx="490.8" cy="134.7" r="1.06" opacity="0.49"/><circle cx="492.2" cy="135.7" r="1.01" opacity="0.89"/><circle cx="494.0" cy="135.8" r="0.79" opacity="0.80"/><circle cx="491.5" cy="139.1" r="0.68" opacity="0.82"/><circle cx="489.2" cy="143.3" r="0.63" opacity="0.51"/><circle cx="488.5" cy="132.2" r="0.49" opacity="0.72"/><circle cx="495.3" cy="138.4" r="0.96" opacity="0.79"/><circle cx="487.4" cy="133.6" r="0.72" opacity="0.60"/><circle cx="491.0" cy="134.9" r="1.11" opacity="0.41"/><circle cx="490.5" cy="138.1" r="1.12" opacity="0.65"/><circle cx="484.4" cy="140.2" r="0.59" opacity="0.63"/><circle cx="483.9" cy="134.7" r="1.00" opacity="0.72"/><circle cx="487.9" cy="138.0" r="0.52" opacity="0.82"/><circle cx="486.7" cy="131.3" r="0.54" opacity="0.62"/><circle cx="490.5" cy="131.6" r="0.50" opacity="0.63"/><circle cx="491.8" cy="134.2" r="0.55" opacity="0.55"/><circle cx="487.8" cy="129.9" r="0.52" opacity="0.48"/><circle cx="489.8" cy="138.5" r="0.82" opacity="0.48"/><circle cx="488.7" cy="137.5" r="1.18" opacity="0.76"/><circle cx="492.6" cy="137.6" r="1.19" opacity="0.80"/><circle cx="489.4" cy="132.4" r="0.56" opacity="0.72"/><circle cx="491.7" cy="137.1" r="0.71" opacity="0.42"/><circle cx="484.6" cy="139.0" r="0.95" opacity="0.65"/><circle cx="487.1" cy="133.1" r="0.51" opacity="0.70"/><circle cx="484.9" cy="138.6" r="1.13" opacity="0.62"/><circle cx="484.4" cy="133.4" r="0.74" opacity="0.51"/><circle cx="488.5" cy="129.3" r="1.02" opacity="0.75"/><circle cx="493.0" cy="131.9" r="0.91" opacity="0.63"/><circle cx="487.8" cy="139.8" r="0.48" opacity="0.61"/><circle cx="490.9" cy="130.8" r="0.90" opacity="0.53"/><circle cx="486.3" cy="137.3" r="0.90" opacity="0.60"/><circle cx="486.0" cy="129.2" r="0.55" opacity="0.73"/><circle cx="490.4" cy="132.6" r="0.79" opacity="0.89"/><circle cx="494.2" cy="136.7" r="0.53" opacity="0.79"/><circle cx="493.8" cy="134.3" r="0.48" opacity="0.69"/><circle cx="484.2" cy="134.4" r="0.81" opacity="0.72"/><circle cx="491.9" cy="132.4" r="0.73" opacity="0.87"/><circle cx="491.1" cy="140.4" r="0.71" opacity="0.78"/><circle cx="489.0" cy="136.6" r="0.62" opacity="0.60"/><circle cx="493.5" cy="136.0" r="0.74" opacity="0.75"/><circle cx="488.1" cy="137.7" r="0.58" opacity="0.77"/><circle cx="493.9" cy="134.3" r="0.58" opacity="0.80"/><circle cx="487.8" cy="137.1" r="0.50" opacity="0.79"/><circle cx="491.6" cy="131.6" r="0.78" opacity="0.68"/><circle cx="486.7" cy="139.3" r="1.05" opacity="0.81"/><circle cx="486.8" cy="136.2" r="0.84" opacity="0.46"/><circle cx="491.5" cy="133.2" r="1.08" opacity="0.53"/><circle cx="487.8" cy="137.4" r="0.74" opacity="0.49"/><circle cx="495.5" cy="135.8" r="0.62" opacity="0.52"/><circle cx="488.5" cy="139.1" r="0.74" opacity="0.72"/><circle cx="487.9" cy="133.2" r="1.14" opacity="0.83"/><circle cx="496.1" cy="137.8" r="1.12" opacity="0.79"/><circle cx="494.1" cy="140.3" r="0.91" opacity="0.41"/><circle cx="498.6" cy="136.3" r="0.92" opacity="0.53"/><circle cx="491.4" cy="136.8" r="0.59" opacity="0.79"/><circle cx="488.6" cy="137.2" r="1.12" opacity="0.80"/><circle cx="493.5" cy="141.5" r="0.89" opacity="0.79"/><circle cx="486.0" cy="129.9" r="1.03" opacity="0.82"/><circle cx="491.6" cy="140.3" r="0.82" opacity="0.77"/><circle cx="482.9" cy="138.2" r="0.84" opacity="0.53"/><circle cx="490.0" cy="137.4" r="0.79" opacity="0.43"/><circle cx="487.8" cy="136.1" r="0.79" opacity="0.65"/><circle cx="482.8" cy="134.2" r="0.41" opacity="0.82"/><circle cx="485.2" cy="136.5" r="0.93" opacity="0.82"/><circle cx="487.1" cy="138.0" r="1.17" opacity="0.44"/><circle cx="486.4" cy="132.3" r="0.42" opacity="0.70"/><circle cx="486.3" cy="129.1" r="0.66" opacity="0.89"/><circle cx="485.6" cy="135.5" r="1.12" opacity="0.42"/><circle cx="488.8" cy="131.4" r="0.67" opacity="0.83"/><circle cx="487.1" cy="138.4" r="0.82" opacity="0.79"/><circle cx="490.7" cy="139.0" r="0.74" opacity="0.68"/><circle cx="491.2" cy="133.4" r="1.06" opacity="0.60"/><circle cx="486.9" cy="135.7" r="0.81" opacity="0.89"/><circle cx="486.2" cy="131.1" r="0.66" opacity="0.56"/><circle cx="488.3" cy="139.7" r="0.91" opacity="0.79"/><circle cx="495.4" cy="137.0" r="1.11" opacity="0.67"/><circle cx="492.7" cy="136.5" r="0.40" opacity="0.49"/><circle cx="494.1" cy="133.7" r="0.93" opacity="0.79"/><circle cx="494.0" cy="133.4" r="0.89" opacity="0.71"/><circle cx="488.2" cy="131.7" r="0.94" opacity="0.51"/><circle cx="487.8" cy="132.7" r="1.01" opacity="0.45"/><circle cx="490.2" cy="136.5" r="1.02" opacity="0.86"/><circle cx="487.8" cy="133.2" r="1.06" opacity="0.79"/><circle cx="487.2" cy="134.8" r="0.64" opacity="0.61"/><circle cx="488.2" cy="138.8" r="0.91" opacity="0.87"/><circle cx="494.2" cy="137.1" r="0.43" opacity="0.46"/><circle cx="491.5" cy="131.9" r="1.13" opacity="0.62"/><circle cx="493.3" cy="136.0" r="0.87" opacity="0.87"/><circle cx="493.8" cy="135.3" r="0.73" opacity="0.45"/><circle cx="488.2" cy="134.0" r="0.52" opacity="0.41"/><circle cx="495.2" cy="135.9" r="0.50" opacity="0.88"/><circle cx="496.0" cy="139.1" r="0.50" opacity="0.41"/><circle cx="489.3" cy="133.4" r="0.99" opacity="0.49"/><circle cx="495.7" cy="137.4" r="0.97" opacity="0.83"/><circle cx="489.6" cy="134.4" r="0.90" opacity="0.75"/><circle cx="481.7" cy="137.5" r="0.60" opacity="0.88"/><circle cx="489.7" cy="135.3" r="0.41" opacity="0.73"/><circle cx="490.4" cy="134.6" r="0.65" opacity="0.76"/><circle cx="493.4" cy="141.1" r="0.79" opacity="0.43"/><circle cx="486.6" cy="138.8" r="0.75" opacity="0.74"/><circle cx="493.7" cy="140.2" r="0.69" opacity="0.72"/><circle cx="487.2" cy="133.3" r="0.71" opacity="0.79"/><circle cx="495.7" cy="133.9" r="0.85" opacity="0.55"/><circle cx="487.8" cy="130.1" r="0.67" opacity="0.70"/><circle cx="496.5" cy="134.9" r="0.88" opacity="0.55"/><circle cx="483.0" cy="138.6" r="0.70" opacity="0.74"/><circle cx="483.6" cy="131.7" r="1.05" opacity="0.54"/><circle cx="492.6" cy="135.8" r="0.74" opacity="0.69"/><circle cx="492.8" cy="129.7" r="0.43" opacity="0.82"/><circle cx="492.5" cy="129.9" r="0.86" opacity="0.54"/><circle cx="493.7" cy="131.1" r="0.95" opacity="0.86"/><circle cx="488.9" cy="136.8" r="0.84" opacity="0.80"/><circle cx="491.6" cy="140.7" r="1.15" opacity="0.52"/><circle cx="485.5" cy="132.8" r="0.77" opacity="0.50"/><circle cx="489.6" cy="141.0" r="1.03" opacity="0.63"/></g><g fill="#000"><circle cx="516.4" cy="139.5" r="0.30" opacity="0.37"/><circle cx="503.7" cy="132.1" r="0.33" opacity="0.46"/><circle cx="504.2" cy="136.6" r="0.19" opacity="0.36"/><circle cx="513.2" cy="141.8" r="0.22" opacity="0.47"/><circle cx="505.6" cy="139.0" r="0.18" opacity="0.31"/><circle cx="515.2" cy="135.6" r="0.17" opacity="0.49"/><circle cx="511.1" cy="132.7" r="0.27" opacity="0.40"/><circle cx="509.2" cy="135.6" r="0.16" opacity="0.60"/><circle cx="514.0" cy="131.6" r="0.26" opacity="0.38"/><circle cx="511.3" cy="130.6" r="0.34" opacity="0.53"/></g><path d="M506.325 128.725 l2.5 6" stroke="#999" stroke-width="0.5"/><g fill="#000"><circle cx="534.4" cy="129.1" r="0.33" opacity="0.52"/><circle cx="532.0" cy="140.2" r="0.28" opacity="0.52"/><circle cx="523.5" cy="133.9" r="0.39" opacity="0.88"/><circle cx="532.7" cy="135.6" r="0.43" opacity="0.66"/><circle cx="536.9" cy="142.4" r="0.33" opacity="0.73"/><circle cx="525.6" cy="130.3" r="0.45" opacity="0.66"/><circle cx="527.7" cy="137.8" r="0.54" opacity="0.90"/><circle cx="531.2" cy="138.4" r="0.33" opacity="0.64"/><circle cx="537.5" cy="132.1" r="0.50" opacity="0.52"/><circle cx="532.5" cy="129.8" r="0.44" opacity="0.89"/><circle cx="533.9" cy="137.8" r="0.48" opacity="0.88"/><circle cx="528.8" cy="132.6" r="0.43" opacity="0.80"/><circle cx="534.7" cy="139.7" r="0.33" opacity="0.55"/><circle cx="527.4" cy="137.1" r="0.32" opacity="0.56"/><circle cx="530.5" cy="135.9" r="0.47" opacity="0.58"/><circle cx="538.9" cy="138.6" r="0.32" opacity="0.87"/><circle cx="536.2" cy="130.8" r="0.29" opacity="0.68"/><circle cx="537.6" cy="141.4" r="0.50" opacity="0.75"/><circle cx="526.1" cy="138.2" r="0.50" opacity="0.69"/><circle cx="528.6" cy="134.4" r="0.32" opacity="0.52"/><circle cx="529.4" cy="130.6" r="0.29" opacity="0.85"/><circle cx="530.3" cy="142.2" r="0.30" opacity="0.61"/><circle cx="533.5" cy="132.6" r="0.30" opacity="0.70"/><circle cx="527.5" cy="144.1" r="0.28" opacity="0.89"/><circle cx="538.4" cy="139.5" r="0.45" opacity="0.58"/><circle cx="526.4" cy="137.4" r="0.33" opacity="0.58"/></g><g fill="#000"><circle cx="543.9" cy="142.1" r="0.80" opacity="0.98"/><circle cx="553.2" cy="138.4" r="0.75" opacity="0.72"/><circle cx="548.7" cy="131.2" r="0.79" opacity="0.70"/><circle cx="551.2" cy="131.1" r="0.41" opacity="0.70"/><circle cx="552.5" cy="130.4" r="0.43" opacity="0.83"/><circle cx="552.8" cy="133.6" r="0.61" opacity="0.74"/><circle cx="552.6" cy="142.5" r="0.67" opacity="0.76"/><circle cx="551.6" cy="136.9" r="0.62" opacity="0.85"/><circle cx="548.8" cy="139.5" r="0.63" opacity="0.91"/><circle cx="551.9" cy="129.7" r="0.44" opacity="0.72"/><circle cx="548.8" cy="130.3" r="0.67" opacity="0.72"/><circle cx="551.3" cy="131.2" r="0.73" opacity="0.96"/><circle cx="548.4" cy="135.8" r="0.76" opacity="0.84"/><circle cx="552.5" cy="132.6" r="0.43" opacity="0.95"/><circle cx="547.1" cy="138.3" r="0.52" opacity="0.88"/><circle cx="555.6" cy="135.9" r="0.55" opacity="0.85"/><circle cx="554.6" cy="140.7" r="0.72" opacity="0.96"/><circle cx="546.3" cy="142.2" r="0.52" opacity="0.93"/><circle cx="556.8" cy="138.7" r="0.78" opacity="0.85"/><circle cx="543.3" cy="135.2" r="0.59" opacity="0.71"/><circle cx="553.4" cy="134.9" r="0.43" opacity="0.73"/><circle cx="549.4" cy="143.4" r="0.36" opacity="0.73"/><circle cx="548.2" cy="132.2" r="0.36" opacity="0.88"/><circle cx="544.0" cy="132.9" r="0.67" opacity="0.73"/><circle cx="554.3" cy="130.5" r="0.37" opacity="0.74"/><circle cx="543.4" cy="136.0" r="0.48" opacity="0.74"/><circle cx="546.8" cy="137.5" r="0.62" opacity="0.96"/><circle cx="553.3" cy="140.9" r="0.69" opacity="0.75"/><circle cx="553.2" cy="128.4" r="0.52" opacity="0.83"/><circle cx="552.7" cy="130.5" r="0.53" opacity="0.98"/><circle cx="550.3" cy="130.8" r="0.46" opacity="0.80"/><circle cx="541.7" cy="139.0" r="0.71" opacity="0.97"/><circle cx="552.5" cy="128.5" r="0.37" opacity="0.86"/><circle cx="557.4" cy="133.6" r="0.46" opacity="0.83"/></g><g fill="#000"><circle cx="565.7" cy="132.1" r="0.33" opacity="0.53"/><circle cx="563.8" cy="138.0" r="0.21" opacity="0.56"/><circle cx="575.9" cy="134.4" r="0.43" opacity="0.75"/><circle cx="571.7" cy="128.7" r="0.42" opacity="0.51"/><circle cx="566.4" cy="132.5" r="0.37" opacity="0.61"/><circle cx="561.6" cy="133.7" r="0.36" opacity="0.60"/><circle cx="563.7" cy="135.1" r="0.44" opacity="0.62"/><circle cx="566.8" cy="141.8" r="0.23" opacity="0.74"/><circle cx="574.5" cy="134.2" r="0.27" opacity="0.69"/><circle cx="566.0" cy="135.1" r="0.23" opacity="0.55"/><circle cx="567.6" cy="140.6" r="0.27" opacity="0.60"/><circle cx="574.0" cy="138.8" r="0.41" opacity="0.74"/><circle cx="563.1" cy="133.0" r="0.25" opacity="0.78"/><circle cx="563.2" cy="137.2" r="0.35" opacity="0.69"/><circle cx="567.5" cy="139.4" r="0.26" opacity="0.70"/><circle cx="564.4" cy="139.8" r="0.20" opacity="0.64"/><circle cx="571.5" cy="132.7" r="0.34" opacity="0.70"/><circle cx="567.2" cy="143.5" r="0.27" opacity="0.81"/><circle cx="570.1" cy="137.5" r="0.42" opacity="0.68"/><circle cx="573.6" cy="137.6" r="0.31" opacity="0.79"/><circle cx="571.9" cy="138.1" r="0.44" opacity="0.80"/><circle cx="571.6" cy="139.6" r="0.29" opacity="0.77"/><circle cx="563.5" cy="130.8" r="0.41" opacity="0.71"/><circle cx="568.5" cy="128.8" r="0.39" opacity="0.69"/><circle cx="570.4" cy="129.2" r="0.43" opacity="0.55"/><circle cx="569.3" cy="135.3" r="0.39" opacity="0.73"/><circle cx="561.1" cy="135.8" r="0.34" opacity="0.67"/><circle cx="570.5" cy="128.4" r="0.35" opacity="0.65"/><circle cx="563.8" cy="137.3" r="0.38" opacity="0.62"/><circle cx="564.4" cy="139.5" r="0.30" opacity="0.63"/><circle cx="570.7" cy="128.6" r="0.32" opacity="0.68"/><circle cx="570.7" cy="139.8" r="0.24" opacity="0.73"/><circle cx="566.9" cy="134.6" r="0.43" opacity="0.63"/><circle cx="573.0" cy="129.6" r="0.44" opacity="0.58"/></g><g fill="#000" filter="url(#bl2)"><circle cx="483.6" cy="158.6" r="0.35" opacity="0.52"/><circle cx="485.2" cy="153.1" r="0.76" opacity="0.89"/><circle cx="482.7" cy="153.4" r="0.58" opacity="0.76"/><circle cx="488.3" cy="150.8" r="0.51" opacity="0.80"/><circle cx="485.8" cy="161.4" r="0.65" opacity="0.76"/><circle cx="494.2" cy="158.1" r="0.53" opacity="0.78"/><circle cx="483.7" cy="152.0" r="0.78" opacity="0.74"/><circle cx="484.5" cy="157.5" r="0.80" opacity="0.67"/><circle cx="483.4" cy="153.9" r="0.43" opacity="0.66"/><circle cx="497.3" cy="154.3" r="0.58" opacity="0.56"/><circle cx="495.4" cy="151.3" r="0.72" opacity="1.00"/><circle cx="494.1" cy="152.0" r="0.42" opacity="0.64"/><circle cx="484.7" cy="154.9" r="0.43" opacity="0.59"/><circle cx="486.1" cy="150.9" r="0.51" opacity="1.00"/><circle cx="489.2" cy="154.1" r="0.54" opacity="0.89"/><circle cx="488.0" cy="161.3" r="0.35" opacity="0.65"/><circle cx="493.5" cy="150.3" r="0.65" opacity="0.60"/><circle cx="484.5" cy="155.4" r="0.47" opacity="0.82"/><circle cx="482.6" cy="153.7" r="0.61" opacity="0.71"/><circle cx="492.5" cy="157.4" r="0.69" opacity="0.55"/><circle cx="492.9" cy="157.2" r="0.59" opacity="0.91"/><circle cx="485.0" cy="150.7" r="0.38" opacity="0.51"/><circle cx="490.8" cy="150.9" r="0.67" opacity="0.68"/><circle cx="492.2" cy="158.8" r="0.39" opacity="0.95"/><circle cx="486.3" cy="153.0" r="0.55" opacity="0.69"/><circle cx="497.2" cy="157.8" r="0.61" opacity="0.98"/><circle cx="484.6" cy="157.5" r="0.46" opacity="0.52"/><circle cx="496.8" cy="152.2" r="0.49" opacity="0.95"/><circle cx="492.0" cy="151.3" r="0.62" opacity="0.98"/><circle cx="482.7" cy="155.5" r="0.46" opacity="0.69"/><circle cx="489.6" cy="151.7" r="0.49" opacity="0.94"/><circle cx="483.4" cy="156.0" r="0.46" opacity="0.59"/><circle cx="488.2" cy="157.9" r="0.79" opacity="0.65"/><circle cx="487.8" cy="154.3" r="0.59" opacity="0.69"/><circle cx="488.6" cy="156.4" r="0.41" opacity="0.91"/><circle cx="488.0" cy="158.4" r="0.44" opacity="0.64"/><circle cx="490.4" cy="156.7" r="0.65" opacity="0.67"/><circle cx="493.9" cy="160.7" r="0.39" opacity="0.63"/><circle cx="491.7" cy="152.9" r="0.55" opacity="0.92"/><circle cx="491.3" cy="152.3" r="0.51" opacity="0.86"/><circle cx="484.8" cy="160.6" r="0.44" opacity="0.98"/><circle cx="486.6" cy="155.2" r="0.55" opacity="0.57"/><circle cx="489.2" cy="151.4" r="0.75" opacity="0.79"/><circle cx="487.7" cy="158.1" r="0.62" opacity="0.61"/><circle cx="492.2" cy="153.3" r="0.58" opacity="0.77"/><circle cx="489.4" cy="162.1" r="0.52" opacity="0.83"/><circle cx="486.3" cy="153.5" r="0.53" opacity="0.54"/><circle cx="493.5" cy="161.7" r="0.49" opacity="0.83"/><circle cx="494.8" cy="159.0" r="0.51" opacity="0.75"/><circle cx="489.7" cy="157.2" r="0.49" opacity="0.61"/><circle cx="494.9" cy="160.0" r="0.48" opacity="0.70"/><circle cx="496.0" cy="151.6" r="0.75" opacity="0.93"/><circle cx="493.0" cy="158.3" r="0.36" opacity="0.84"/><circle cx="487.9" cy="151.3" r="0.54" opacity="0.83"/><circle cx="489.1" cy="151.6" r="0.73" opacity="0.68"/><circle cx="488.0" cy="152.9" r="0.40" opacity="0.96"/><circle cx="489.6" cy="148.7" r="0.37" opacity="0.52"/><circle cx="492.1" cy="158.2" r="0.49" opacity="0.69"/><circle cx="494.5" cy="156.3" r="0.64" opacity="0.59"/><circle cx="493.4" cy="150.3" r="0.67" opacity="0.63"/><circle cx="484.4" cy="157.8" r="0.51" opacity="0.50"/><circle cx="493.7" cy="149.3" r="0.48" opacity="0.52"/><circle cx="494.0" cy="150.5" r="0.37" opacity="0.62"/><circle cx="495.6" cy="159.7" r="0.44" opacity="0.96"/><circle cx="490.3" cy="153.0" r="0.66" opacity="0.70"/><circle cx="490.2" cy="148.2" r="0.48" opacity="0.54"/><circle cx="495.1" cy="153.6" r="0.77" opacity="0.85"/><circle cx="489.8" cy="148.2" r="0.63" opacity="0.73"/><circle cx="496.4" cy="157.5" r="0.54" opacity="0.76"/><circle cx="492.8" cy="154.1" r="0.69" opacity="0.52"/><circle cx="488.2" cy="148.6" r="0.47" opacity="0.77"/><circle cx="496.4" cy="154.1" r="0.59" opacity="0.62"/><circle cx="494.6" cy="157.0" r="0.54" opacity="0.60"/><circle cx="489.2" cy="158.0" r="0.67" opacity="0.84"/><circle cx="490.6" cy="159.1" r="0.58" opacity="0.72"/><circle cx="494.5" cy="153.5" r="0.48" opacity="0.94"/><circle cx="494.0" cy="159.8" r="0.50" opacity="0.91"/><circle cx="483.8" cy="153.2" r="0.43" opacity="0.83"/><circle cx="486.0" cy="152.2" r="0.69" opacity="0.92"/><circle cx="493.4" cy="158.0" r="0.51" opacity="0.60"/><circle cx="494.1" cy="156.8" r="0.44" opacity="0.85"/><circle cx="487.8" cy="156.1" r="0.50" opacity="0.73"/><circle cx="488.2" cy="157.7" r="0.38" opacity="0.51"/><circle cx="497.0" cy="154.9" r="0.39" opacity="0.86"/><circle cx="496.1" cy="154.5" r="0.40" opacity="0.74"/><circle cx="487.2" cy="156.6" r="0.59" opacity="0.50"/><circle cx="495.8" cy="152.2" r="0.63" opacity="0.97"/><circle cx="488.0" cy="152.1" r="0.46" opacity="0.57"/><circle cx="497.0" cy="156.5" r="0.73" opacity="0.65"/><circle cx="492.7" cy="161.0" r="0.73" opacity="0.96"/><circle cx="493.7" cy="161.3" r="0.72" opacity="0.87"/><circle cx="488.7" cy="158.2" r="0.72" opacity="0.66"/><circle cx="486.4" cy="159.5" r="0.52" opacity="0.92"/><circle cx="490.4" cy="156.9" r="0.61" opacity="0.81"/><circle cx="493.1" cy="149.3" r="0.76" opacity="0.97"/><circle cx="484.8" cy="155.5" r="0.42" opacity="0.65"/><circle cx="488.3" cy="154.2" r="0.66" opacity="0.58"/><circle cx="483.1" cy="158.0" r="0.39" opacity="0.52"/><circle cx="487.1" cy="156.5" r="0.68" opacity="0.50"/><circle cx="494.2" cy="149.2" r="0.70" opacity="0.71"/><circle cx="489.0" cy="161.5" r="0.58" opacity="0.71"/><circle cx="487.5" cy="159.7" r="0.65" opacity="0.91"/><circle cx="492.9" cy="153.5" r="0.48" opacity="0.72"/><circle cx="486.0" cy="153.5" r="0.44" opacity="0.54"/><circle cx="487.9" cy="160.0" r="0.79" opacity="0.95"/><circle cx="495.4" cy="149.5" r="0.78" opacity="0.81"/><circle cx="491.0" cy="153.5" r="0.65" opacity="0.80"/><circle cx="488.6" cy="160.9" r="0.78" opacity="0.74"/><circle cx="487.7" cy="151.9" r="0.50" opacity="0.94"/><circle cx="493.6" cy="155.9" r="0.66" opacity="0.72"/><circle cx="495.7" cy="158.5" r="0.52" opacity="0.79"/><circle cx="485.4" cy="158.1" r="0.60" opacity="0.70"/><circle cx="492.8" cy="157.5" r="0.75" opacity="0.77"/><circle cx="495.8" cy="160.0" r="0.46" opacity="0.55"/><circle cx="486.4" cy="154.5" r="0.57" opacity="0.78"/><circle cx="491.1" cy="161.1" r="0.40" opacity="0.76"/><circle cx="488.4" cy="154.1" r="0.53" opacity="0.54"/><circle cx="483.5" cy="158.0" r="0.60" opacity="0.86"/><circle cx="490.4" cy="152.6" r="0.80" opacity="0.86"/><circle cx="496.0" cy="159.5" r="0.53" opacity="0.59"/></g><circle cx="510.325" cy="155.275" r="8.3" fill="#000" opacity="0.25"/><g fill="#000"><circle cx="516.3" cy="153.7" r="0.75" opacity="0.65"/><circle cx="510.6" cy="153.3" r="0.51" opacity="0.75"/><circle cx="516.6" cy="155.9" r="0.50" opacity="0.72"/><circle cx="508.9" cy="150.1" r="0.80" opacity="0.85"/><circle cx="514.6" cy="150.8" r="0.81" opacity="0.95"/><circle cx="513.8" cy="161.4" r="0.55" opacity="0.91"/><circle cx="507.2" cy="148.5" r="0.46" opacity="0.75"/><circle cx="509.7" cy="147.3" r="0.72" opacity="0.62"/><circle cx="508.3" cy="153.7" r="0.65" opacity="0.92"/><circle cx="516.3" cy="160.4" r="0.70" opacity="0.70"/><circle cx="512.2" cy="160.4" r="0.78" opacity="0.83"/><circle cx="511.2" cy="156.1" r="0.45" opacity="0.92"/><circle cx="512.7" cy="160.9" r="0.53" opacity="0.87"/><circle cx="508.0" cy="157.4" r="0.79" opacity="0.82"/><circle cx="507.6" cy="148.4" r="0.83" opacity="0.61"/><circle cx="508.6" cy="157.9" r="0.63" opacity="0.95"/><circle cx="510.8" cy="153.8" r="0.48" opacity="0.93"/><circle cx="508.1" cy="150.6" r="0.61" opacity="0.66"/><circle cx="513.2" cy="151.0" r="0.79" opacity="0.84"/><circle cx="514.5" cy="157.4" r="0.50" opacity="0.96"/><circle cx="508.9" cy="154.4" r="0.48" opacity="0.74"/><circle cx="504.2" cy="156.5" r="0.57" opacity="0.74"/><circle cx="516.6" cy="155.5" r="0.55" opacity="0.61"/><circle cx="502.4" cy="157.3" r="0.42" opacity="0.66"/><circle cx="508.3" cy="151.5" r="0.52" opacity="0.80"/><circle cx="509.9" cy="161.4" r="0.64" opacity="0.98"/><circle cx="511.8" cy="155.2" r="0.65" opacity="0.91"/><circle cx="515.3" cy="150.1" r="0.68" opacity="0.85"/><circle cx="507.5" cy="158.6" r="0.76" opacity="0.95"/><circle cx="516.6" cy="152.7" r="0.54" opacity="0.91"/><circle cx="509.9" cy="149.4" r="0.69" opacity="0.74"/><circle cx="505.4" cy="153.6" r="0.43" opacity="0.73"/><circle cx="506.7" cy="162.6" r="0.62" opacity="0.75"/><circle cx="510.5" cy="159.2" r="0.56" opacity="0.65"/><circle cx="518.0" cy="155.6" r="0.60" opacity="0.78"/><circle cx="506.2" cy="153.4" r="0.48" opacity="0.63"/><circle cx="508.9" cy="159.6" r="0.73" opacity="0.82"/><circle cx="514.7" cy="153.4" r="0.81" opacity="0.83"/><circle cx="513.4" cy="156.9" r="0.66" opacity="0.99"/><circle cx="505.8" cy="160.9" r="0.59" opacity="0.95"/><circle cx="515.5" cy="157.6" r="0.80" opacity="0.71"/><circle cx="510.3" cy="156.5" r="0.47" opacity="0.71"/><circle cx="509.2" cy="151.6" r="0.58" opacity="0.68"/><circle cx="504.2" cy="150.7" r="0.69" opacity="0.68"/><circle cx="509.5" cy="147.3" r="0.67" opacity="0.63"/><circle cx="513.1" cy="148.1" r="0.55" opacity="0.65"/><circle cx="512.6" cy="160.8" r="0.79" opacity="0.86"/><circle cx="513.7" cy="153.5" r="0.55" opacity="0.90"/><circle cx="507.2" cy="151.1" r="0.71" opacity="0.74"/><circle cx="515.3" cy="157.1" r="0.42" opacity="0.85"/><circle cx="507.4" cy="160.2" r="0.67" opacity="0.70"/><circle cx="509.4" cy="155.5" r="0.82" opacity="0.83"/><circle cx="512.3" cy="155.1" r="0.68" opacity="0.89"/><circle cx="509.1" cy="157.5" r="0.47" opacity="0.66"/><circle cx="510.6" cy="152.8" r="0.77" opacity="0.77"/><circle cx="504.2" cy="153.8" r="0.65" opacity="0.86"/><circle cx="506.5" cy="152.5" r="0.73" opacity="0.70"/><circle cx="508.6" cy="148.3" r="0.75" opacity="0.72"/><circle cx="511.5" cy="147.2" r="0.60" opacity="0.71"/><circle cx="502.5" cy="154.1" r="0.46" opacity="0.60"/><circle cx="503.8" cy="156.3" r="0.75" opacity="0.74"/><circle cx="514.2" cy="155.0" r="0.74" opacity="0.64"/><circle cx="513.3" cy="155.8" r="0.43" opacity="0.80"/><circle cx="507.0" cy="154.1" r="0.82" opacity="0.75"/><circle cx="512.4" cy="158.1" r="0.73" opacity="0.97"/><circle cx="511.1" cy="156.5" r="0.75" opacity="0.70"/><circle cx="516.1" cy="154.6" r="0.69" opacity="0.74"/><circle cx="512.1" cy="150.0" r="0.55" opacity="0.96"/><circle cx="515.8" cy="159.7" r="0.43" opacity="0.86"/><circle cx="504.1" cy="159.7" r="0.43" opacity="0.83"/><circle cx="503.7" cy="159.5" r="0.83" opacity="0.85"/><circle cx="511.0" cy="159.3" r="0.52" opacity="0.77"/><circle cx="510.8" cy="158.9" r="0.74" opacity="0.86"/><circle cx="507.9" cy="163.1" r="0.50" opacity="0.83"/><circle cx="514.5" cy="161.6" r="0.79" opacity="0.71"/><circle cx="510.4" cy="147.8" r="0.53" opacity="0.73"/><circle cx="502.6" cy="156.0" r="0.47" opacity="0.87"/><circle cx="505.8" cy="152.1" r="0.66" opacity="0.95"/><circle cx="512.3" cy="162.7" r="0.56" opacity="0.91"/><circle cx="512.6" cy="152.6" r="0.79" opacity="1.00"/><circle cx="509.9" cy="156.5" r="0.45" opacity="0.99"/><circle cx="518.1" cy="155.7" r="0.47" opacity="0.89"/><circle cx="513.1" cy="157.2" r="0.71" opacity="0.64"/><circle cx="506.1" cy="161.9" r="0.72" opacity="0.95"/><circle cx="511.8" cy="155.1" r="0.51" opacity="0.92"/><circle cx="509.7" cy="153.8" r="0.63" opacity="0.69"/><circle cx="507.9" cy="156.4" r="0.41" opacity="1.00"/><circle cx="507.2" cy="162.3" r="0.45" opacity="0.79"/><circle cx="513.9" cy="159.3" r="0.48" opacity="0.87"/><circle cx="514.5" cy="160.9" r="0.63" opacity="0.64"/><circle cx="506.8" cy="159.9" r="0.81" opacity="0.74"/><circle cx="512.1" cy="163.1" r="0.80" opacity="0.89"/><circle cx="509.8" cy="158.7" r="0.52" opacity="0.63"/><circle cx="516.0" cy="156.8" r="0.58" opacity="0.82"/><circle cx="509.8" cy="155.9" r="0.71" opacity="0.86"/><circle cx="504.5" cy="153.6" r="0.71" opacity="0.99"/><circle cx="515.2" cy="150.3" r="0.58" opacity="0.73"/><circle cx="503.3" cy="159.2" r="0.57" opacity="0.75"/><circle cx="507.7" cy="156.9" r="0.85" opacity="0.60"/><circle cx="504.2" cy="150.3" r="0.51" opacity="0.84"/><circle cx="507.4" cy="158.1" r="0.49" opacity="0.65"/><circle cx="514.3" cy="149.2" r="0.81" opacity="0.62"/><circle cx="508.7" cy="150.9" r="0.69" opacity="0.82"/><circle cx="507.1" cy="162.7" r="0.40" opacity="0.90"/><circle cx="513.9" cy="150.6" r="0.67" opacity="1.00"/><circle cx="511.0" cy="161.7" r="0.73" opacity="0.75"/><circle cx="509.1" cy="150.3" r="0.64" opacity="0.85"/><circle cx="508.3" cy="151.1" r="0.68" opacity="0.82"/><circle cx="511.4" cy="161.6" r="0.52" opacity="0.96"/><circle cx="503.5" cy="156.4" r="0.63" opacity="0.79"/><circle cx="510.9" cy="158.3" r="0.82" opacity="0.81"/><circle cx="504.4" cy="154.4" r="0.77" opacity="0.70"/><circle cx="513.8" cy="161.8" r="0.61" opacity="0.86"/><circle cx="513.9" cy="148.4" r="0.79" opacity="0.62"/><circle cx="504.8" cy="160.4" r="0.77" opacity="0.65"/><circle cx="512.7" cy="158.7" r="0.45" opacity="0.74"/><circle cx="512.3" cy="149.7" r="0.60" opacity="0.64"/><circle cx="503.8" cy="160.3" r="0.71" opacity="0.78"/><circle cx="503.1" cy="156.3" r="0.74" opacity="0.66"/><circle cx="508.2" cy="150.8" r="0.63" opacity="0.70"/><circle cx="507.0" cy="158.7" r="0.57" opacity="0.61"/><circle cx="512.2" cy="161.2" r="0.43" opacity="0.67"/><circle cx="509.5" cy="151.1" r="0.55" opacity="0.70"/><circle cx="511.6" cy="153.1" r="0.69" opacity="0.94"/><circle cx="511.9" cy="160.4" r="0.76" opacity="0.85"/><circle cx="509.1" cy="156.5" r="0.60" opacity="0.75"/><circle cx="509.3" cy="150.9" r="0.58" opacity="0.86"/><circle cx="512.1" cy="150.8" r="0.57" opacity="0.83"/><circle cx="513.5" cy="153.6" r="0.84" opacity="0.88"/><circle cx="505.7" cy="160.1" r="0.55" opacity="0.63"/><circle cx="510.5" cy="150.2" r="0.64" opacity="0.80"/><circle cx="516.1" cy="151.1" r="0.41" opacity="0.84"/><circle cx="504.9" cy="156.6" r="0.78" opacity="0.77"/><circle cx="502.7" cy="156.6" r="0.60" opacity="0.80"/><circle cx="502.9" cy="154.7" r="0.70" opacity="0.90"/><circle cx="509.0" cy="156.2" r="0.71" opacity="0.82"/><circle cx="511.2" cy="148.1" r="0.45" opacity="0.69"/><circle cx="516.9" cy="158.7" r="0.45" opacity="0.64"/><circle cx="510.5" cy="149.1" r="0.42" opacity="0.87"/><circle cx="508.9" cy="149.7" r="0.42" opacity="0.88"/><circle cx="504.9" cy="158.4" r="0.85" opacity="0.93"/><circle cx="512.5" cy="153.0" r="0.55" opacity="0.81"/><circle cx="518.5" cy="155.6" r="0.52" opacity="0.70"/><circle cx="508.7" cy="159.1" r="0.79" opacity="0.82"/><circle cx="505.0" cy="154.9" r="0.42" opacity="0.72"/><circle cx="515.2" cy="149.8" r="0.79" opacity="0.70"/><circle cx="510.9" cy="157.1" r="0.64" opacity="0.75"/><circle cx="504.7" cy="156.6" r="0.66" opacity="0.75"/><circle cx="511.5" cy="151.8" r="0.81" opacity="0.82"/><circle cx="514.7" cy="156.7" r="0.64" opacity="0.76"/><circle cx="506.0" cy="153.4" r="0.52" opacity="0.92"/><circle cx="508.5" cy="162.0" r="0.76" opacity="0.84"/><circle cx="502.7" cy="157.5" r="0.60" opacity="0.95"/><circle cx="515.4" cy="157.2" r="0.69" opacity="0.62"/><circle cx="511.8" cy="153.6" r="0.67" opacity="0.67"/><circle cx="515.8" cy="152.4" r="0.76" opacity="0.80"/><circle cx="507.2" cy="149.3" r="0.53" opacity="0.68"/><circle cx="512.0" cy="152.6" r="0.81" opacity="0.68"/><circle cx="512.4" cy="156.8" r="0.75" opacity="0.98"/><circle cx="504.6" cy="158.7" r="0.52" opacity="0.96"/><circle cx="509.1" cy="152.3" r="0.43" opacity="0.88"/><circle cx="517.6" cy="157.2" r="0.53" opacity="0.69"/><circle cx="506.3" cy="153.0" r="0.65" opacity="0.66"/><circle cx="514.3" cy="152.8" r="0.78" opacity="0.66"/><circle cx="512.8" cy="147.5" r="0.58" opacity="0.61"/><circle cx="505.5" cy="159.8" r="0.50" opacity="0.82"/><circle cx="515.0" cy="158.4" r="0.73" opacity="0.77"/><circle cx="509.1" cy="152.8" r="0.77" opacity="0.65"/><circle cx="517.6" cy="151.5" r="0.82" opacity="0.81"/><circle cx="509.1" cy="160.0" r="0.74" opacity="0.80"/></g><g fill="#000" filter="url(#bl2)"><circle cx="529.875" cy="155.275" r="3" opacity="0.5"/><circle cx="532.0" cy="154.3" r="0.57" opacity="0.93"/><circle cx="525.2" cy="152.0" r="0.39" opacity="0.57"/><circle cx="528.9" cy="162.6" r="0.73" opacity="0.61"/><circle cx="531.1" cy="154.6" r="0.62" opacity="0.98"/><circle cx="525.6" cy="161.6" r="0.65" opacity="0.53"/><circle cx="527.3" cy="159.8" r="0.46" opacity="0.87"/><circle cx="532.9" cy="161.5" r="0.48" opacity="0.53"/><circle cx="527.6" cy="154.4" r="0.60" opacity="0.89"/><circle cx="525.5" cy="152.3" r="0.37" opacity="0.76"/><circle cx="535.0" cy="158.9" r="0.41" opacity="0.79"/><circle cx="527.0" cy="159.1" r="0.65" opacity="0.58"/><circle cx="533.5" cy="161.9" r="0.50" opacity="0.92"/><circle cx="533.7" cy="151.4" r="0.42" opacity="0.55"/><circle cx="531.8" cy="153.4" r="0.57" opacity="0.77"/><circle cx="533.8" cy="158.9" r="0.42" opacity="0.77"/><circle cx="525.2" cy="155.1" r="0.44" opacity="0.70"/><circle cx="530.7" cy="157.9" r="0.46" opacity="0.94"/><circle cx="522.5" cy="155.2" r="0.36" opacity="0.97"/><circle cx="523.0" cy="155.8" r="0.61" opacity="0.84"/><circle cx="530.8" cy="162.0" r="0.42" opacity="0.63"/><circle cx="534.7" cy="156.2" r="0.58" opacity="0.65"/><circle cx="531.6" cy="153.8" r="0.61" opacity="0.62"/><circle cx="524.2" cy="151.4" r="0.67" opacity="0.53"/><circle cx="530.0" cy="161.3" r="0.79" opacity="0.52"/><circle cx="525.1" cy="150.9" r="0.72" opacity="0.67"/><circle cx="531.8" cy="150.4" r="0.76" opacity="0.51"/><circle cx="534.5" cy="153.4" r="0.53" opacity="0.54"/><circle cx="530.1" cy="162.0" r="0.66" opacity="0.58"/><circle cx="528.2" cy="157.7" r="0.44" opacity="0.61"/><circle cx="526.1" cy="162.0" r="0.80" opacity="0.90"/><circle cx="524.4" cy="156.0" r="0.70" opacity="0.95"/><circle cx="529.9" cy="149.1" r="0.44" opacity="0.81"/><circle cx="533.8" cy="149.6" r="0.39" opacity="0.86"/><circle cx="528.0" cy="157.8" r="0.78" opacity="0.84"/><circle cx="529.8" cy="152.4" r="0.72" opacity="0.97"/><circle cx="535.4" cy="151.5" r="0.72" opacity="0.90"/><circle cx="525.5" cy="152.5" r="0.72" opacity="0.89"/><circle cx="532.8" cy="152.2" r="0.78" opacity="0.77"/><circle cx="532.4" cy="154.4" r="0.79" opacity="0.89"/><circle cx="529.8" cy="162.4" r="0.45" opacity="0.60"/><circle cx="526.2" cy="156.3" r="0.57" opacity="0.95"/><circle cx="527.3" cy="149.2" r="0.53" opacity="0.89"/><circle cx="531.6" cy="149.1" r="0.77" opacity="0.91"/><circle cx="528.0" cy="156.6" r="0.64" opacity="0.92"/><circle cx="526.7" cy="160.4" r="0.73" opacity="0.90"/><circle cx="535.3" cy="155.4" r="0.36" opacity="0.56"/><circle cx="531.8" cy="150.6" r="0.62" opacity="0.73"/><circle cx="528.0" cy="158.4" r="0.51" opacity="0.92"/><circle cx="526.8" cy="152.4" r="0.39" opacity="0.64"/><circle cx="528.3" cy="150.3" r="0.65" opacity="0.90"/><circle cx="534.6" cy="159.7" r="0.37" opacity="0.91"/><circle cx="531.5" cy="159.0" r="0.78" opacity="0.68"/><circle cx="531.1" cy="162.5" r="0.62" opacity="0.95"/><circle cx="525.5" cy="158.7" r="0.78" opacity="0.75"/><circle cx="533.3" cy="155.0" r="0.72" opacity="0.58"/><circle cx="529.7" cy="155.3" r="0.43" opacity="0.97"/><circle cx="523.1" cy="157.3" r="0.46" opacity="0.68"/><circle cx="534.5" cy="158.7" r="0.74" opacity="0.76"/><circle cx="524.5" cy="160.5" r="0.75" opacity="0.83"/><circle cx="535.3" cy="158.1" r="0.55" opacity="0.98"/><circle cx="525.8" cy="160.1" r="0.63" opacity="0.69"/><circle cx="523.5" cy="154.4" r="0.76" opacity="0.75"/><circle cx="524.8" cy="161.1" r="0.38" opacity="0.92"/><circle cx="527.5" cy="150.0" r="0.55" opacity="0.88"/><circle cx="535.0" cy="151.1" r="0.69" opacity="0.52"/><circle cx="528.6" cy="157.8" r="0.78" opacity="0.95"/><circle cx="533.6" cy="160.0" r="0.61" opacity="0.52"/><circle cx="524.6" cy="159.5" r="0.64" opacity="0.64"/><circle cx="530.2" cy="151.1" r="0.59" opacity="0.71"/><circle cx="536.1" cy="154.4" r="0.71" opacity="0.84"/><circle cx="524.3" cy="160.5" r="0.67" opacity="0.85"/><circle cx="529.3" cy="158.4" r="0.61" opacity="0.91"/><circle cx="531.1" cy="150.9" r="0.41" opacity="0.76"/><circle cx="532.1" cy="153.1" r="0.68" opacity="0.59"/><circle cx="529.2" cy="156.9" r="0.48" opacity="0.69"/><circle cx="537.4" cy="153.7" r="0.43" opacity="0.65"/><circle cx="533.1" cy="154.1" r="0.49" opacity="0.72"/><circle cx="533.0" cy="157.8" r="0.53" opacity="0.69"/><circle cx="533.8" cy="154.4" r="0.44" opacity="0.95"/><circle cx="523.1" cy="157.5" r="0.64" opacity="0.89"/><circle cx="528.7" cy="158.1" r="0.69" opacity="0.74"/><circle cx="523.9" cy="153.0" r="0.69" opacity="0.64"/><circle cx="525.0" cy="160.9" r="0.59" opacity="0.64"/><circle cx="527.2" cy="152.4" r="0.70" opacity="0.52"/><circle cx="532.6" cy="150.1" r="0.51" opacity="0.97"/><circle cx="529.5" cy="159.1" r="0.38" opacity="0.77"/><circle cx="530.0" cy="148.9" r="0.54" opacity="0.90"/><circle cx="533.2" cy="158.1" r="0.64" opacity="0.98"/><circle cx="525.6" cy="150.4" r="0.70" opacity="0.70"/><circle cx="536.1" cy="152.8" r="0.50" opacity="0.70"/><circle cx="531.5" cy="150.9" r="0.43" opacity="0.94"/><circle cx="524.4" cy="154.2" r="0.65" opacity="0.95"/><circle cx="532.9" cy="158.7" r="0.38" opacity="0.71"/><circle cx="522.7" cy="155.2" r="0.65" opacity="0.79"/><circle cx="525.0" cy="158.6" r="0.47" opacity="0.92"/><circle cx="531.6" cy="148.3" r="0.42" opacity="0.84"/><circle cx="530.0" cy="149.8" r="0.75" opacity="0.95"/><circle cx="529.6" cy="148.2" r="0.64" opacity="0.94"/><circle cx="534.3" cy="160.1" r="0.67" opacity="0.81"/><circle cx="529.6" cy="157.3" r="0.62" opacity="0.91"/><circle cx="529.4" cy="158.8" r="0.45" opacity="0.55"/><circle cx="526.4" cy="148.4" r="0.71" opacity="0.68"/><circle cx="529.2" cy="153.3" r="0.73" opacity="0.66"/><circle cx="536.1" cy="155.4" r="0.41" opacity="0.64"/><circle cx="534.7" cy="157.2" r="0.60" opacity="0.90"/><circle cx="536.8" cy="157.0" r="0.40" opacity="0.61"/><circle cx="526.7" cy="152.0" r="0.50" opacity="0.78"/><circle cx="531.3" cy="162.1" r="0.44" opacity="0.92"/><circle cx="531.9" cy="149.9" r="0.36" opacity="0.89"/><circle cx="535.3" cy="156.3" r="0.54" opacity="0.53"/><circle cx="525.3" cy="150.4" r="0.61" opacity="0.70"/><circle cx="523.9" cy="154.8" r="0.45" opacity="0.93"/><circle cx="536.9" cy="155.1" r="0.78" opacity="0.66"/><circle cx="532.0" cy="155.1" r="0.57" opacity="0.57"/><circle cx="523.7" cy="157.1" r="0.67" opacity="0.73"/><circle cx="528.0" cy="158.1" r="0.53" opacity="0.64"/><circle cx="532.2" cy="161.6" r="0.58" opacity="0.72"/><circle cx="532.0" cy="161.5" r="0.44" opacity="0.63"/><circle cx="523.8" cy="152.9" r="0.79" opacity="0.87"/><circle cx="537.0" cy="152.9" r="0.68" opacity="0.86"/></g><circle cx="549.425" cy="155.275" r="8.3" fill="#000" opacity="0.3"/><g fill="#000"><circle cx="552.9" cy="156.7" r="0.41" opacity="0.95"/><circle cx="548.3" cy="148.9" r="0.52" opacity="0.74"/><circle cx="552.8" cy="160.9" r="0.85" opacity="0.72"/><circle cx="552.7" cy="156.2" r="0.56" opacity="0.96"/><circle cx="551.3" cy="150.1" r="0.45" opacity="0.64"/><circle cx="553.5" cy="161.2" r="0.61" opacity="1.00"/><circle cx="555.6" cy="151.4" r="0.61" opacity="0.93"/><circle cx="551.3" cy="157.2" r="0.65" opacity="0.80"/><circle cx="550.5" cy="159.3" r="0.41" opacity="0.96"/><circle cx="547.5" cy="147.6" r="0.84" opacity="0.77"/><circle cx="548.9" cy="150.2" r="0.77" opacity="0.94"/><circle cx="550.0" cy="156.0" r="0.50" opacity="0.83"/><circle cx="548.9" cy="155.8" r="0.77" opacity="0.91"/><circle cx="547.8" cy="155.7" r="0.80" opacity="0.81"/><circle cx="553.6" cy="157.3" r="0.68" opacity="0.95"/><circle cx="542.9" cy="155.9" r="0.49" opacity="0.70"/><circle cx="553.6" cy="152.4" r="0.45" opacity="0.84"/><circle cx="552.0" cy="157.9" r="0.61" opacity="0.83"/><circle cx="544.9" cy="150.1" r="0.60" opacity="0.63"/><circle cx="549.1" cy="153.4" r="0.61" opacity="0.76"/><circle cx="546.2" cy="149.1" r="0.51" opacity="0.86"/><circle cx="547.4" cy="150.0" r="0.46" opacity="0.96"/><circle cx="547.8" cy="154.1" r="0.51" opacity="0.99"/><circle cx="550.1" cy="160.4" r="0.75" opacity="0.93"/><circle cx="544.7" cy="150.0" r="0.42" opacity="0.64"/><circle cx="556.7" cy="154.2" r="0.42" opacity="0.62"/><circle cx="549.9" cy="163.2" r="0.50" opacity="0.87"/><circle cx="555.4" cy="152.5" r="0.81" opacity="0.71"/><circle cx="550.1" cy="156.2" r="0.74" opacity="0.64"/><circle cx="556.2" cy="154.1" r="0.48" opacity="0.92"/><circle cx="552.5" cy="160.3" r="0.45" opacity="0.91"/><circle cx="555.5" cy="150.3" r="0.40" opacity="0.94"/><circle cx="542.4" cy="152.7" r="0.63" opacity="0.85"/><circle cx="543.3" cy="151.2" r="0.43" opacity="0.62"/><circle cx="545.2" cy="154.0" r="0.58" opacity="0.60"/><circle cx="549.4" cy="154.0" r="0.77" opacity="0.92"/><circle cx="546.7" cy="156.0" r="0.69" opacity="0.68"/><circle cx="547.0" cy="156.4" r="0.84" opacity="0.82"/><circle cx="547.9" cy="157.3" r="0.73" opacity="0.94"/><circle cx="550.9" cy="153.1" r="0.57" opacity="0.72"/><circle cx="549.7" cy="152.1" r="0.67" opacity="0.99"/><circle cx="549.5" cy="154.6" r="0.43" opacity="0.65"/><circle cx="547.2" cy="149.3" r="0.63" opacity="0.78"/><circle cx="544.1" cy="158.8" r="0.69" opacity="0.97"/><circle cx="548.6" cy="148.0" r="0.81" opacity="0.93"/><circle cx="549.1" cy="153.9" r="0.71" opacity="0.94"/><circle cx="542.5" cy="158.5" r="0.48" opacity="0.98"/><circle cx="543.0" cy="157.7" r="0.51" opacity="0.72"/><circle cx="546.7" cy="159.1" r="0.44" opacity="0.78"/><circle cx="556.0" cy="154.5" r="0.82" opacity="0.90"/><circle cx="553.7" cy="148.3" r="0.74" opacity="0.71"/><circle cx="549.4" cy="160.5" r="0.41" opacity="0.69"/><circle cx="555.4" cy="150.1" r="0.55" opacity="0.91"/><circle cx="550.6" cy="147.6" r="0.76" opacity="0.81"/><circle cx="555.3" cy="159.8" r="0.54" opacity="0.85"/><circle cx="545.4" cy="159.7" r="0.83" opacity="0.66"/><circle cx="542.9" cy="154.0" r="0.64" opacity="0.98"/><circle cx="542.9" cy="159.6" r="0.71" opacity="0.99"/><circle cx="552.6" cy="157.3" r="0.53" opacity="0.96"/><circle cx="553.6" cy="155.6" r="0.72" opacity="1.00"/><circle cx="551.8" cy="160.1" r="0.71" opacity="0.88"/><circle cx="549.2" cy="148.2" r="0.51" opacity="0.70"/><circle cx="556.1" cy="156.5" r="0.49" opacity="0.70"/><circle cx="555.8" cy="153.8" r="0.67" opacity="0.86"/><circle cx="543.8" cy="151.3" r="0.54" opacity="0.63"/><circle cx="550.3" cy="155.7" r="0.56" opacity="0.66"/><circle cx="553.8" cy="159.0" r="0.84" opacity="0.88"/><circle cx="548.4" cy="162.4" r="0.48" opacity="0.64"/><circle cx="547.7" cy="160.2" r="0.71" opacity="0.78"/><circle cx="549.1" cy="152.8" r="0.82" opacity="0.74"/><circle cx="550.1" cy="154.0" r="0.77" opacity="0.69"/><circle cx="553.9" cy="149.5" r="0.70" opacity="0.71"/><circle cx="553.0" cy="155.5" r="0.81" opacity="0.66"/><circle cx="546.0" cy="150.0" r="0.70" opacity="0.67"/><circle cx="551.0" cy="157.3" r="0.84" opacity="0.75"/><circle cx="545.9" cy="150.2" r="0.50" opacity="0.63"/><circle cx="557.0" cy="156.0" r="0.46" opacity="0.99"/><circle cx="544.9" cy="160.5" r="0.46" opacity="0.92"/><circle cx="549.4" cy="160.2" r="0.64" opacity="0.64"/><circle cx="549.5" cy="162.6" r="0.53" opacity="0.75"/><circle cx="549.8" cy="151.4" r="0.49" opacity="0.69"/><circle cx="545.7" cy="158.6" r="0.69" opacity="0.79"/><circle cx="550.7" cy="153.9" r="0.70" opacity="0.93"/><circle cx="549.6" cy="156.7" r="0.60" opacity="0.65"/><circle cx="542.7" cy="157.0" r="0.44" opacity="0.65"/><circle cx="546.0" cy="155.7" r="0.50" opacity="0.78"/><circle cx="551.0" cy="156.7" r="0.56" opacity="0.79"/><circle cx="555.1" cy="152.9" r="0.43" opacity="0.69"/><circle cx="549.2" cy="149.1" r="0.79" opacity="0.98"/><circle cx="551.1" cy="153.2" r="0.82" opacity="0.81"/><circle cx="549.6" cy="158.7" r="0.79" opacity="0.68"/><circle cx="553.1" cy="157.4" r="0.82" opacity="0.78"/><circle cx="549.2" cy="153.1" r="0.60" opacity="0.73"/><circle cx="551.3" cy="161.7" r="0.56" opacity="0.65"/><circle cx="555.1" cy="154.7" r="0.48" opacity="0.60"/><circle cx="546.1" cy="150.5" r="0.41" opacity="0.79"/><circle cx="549.1" cy="149.3" r="0.51" opacity="0.80"/><circle cx="544.2" cy="151.2" r="0.47" opacity="0.92"/><circle cx="556.1" cy="152.9" r="0.79" opacity="0.75"/><circle cx="552.3" cy="153.3" r="0.50" opacity="0.84"/><circle cx="551.3" cy="153.9" r="0.50" opacity="0.61"/><circle cx="546.6" cy="156.4" r="0.49" opacity="0.90"/><circle cx="542.5" cy="151.3" r="0.58" opacity="0.87"/><circle cx="557.4" cy="155.9" r="0.50" opacity="0.79"/><circle cx="541.5" cy="154.7" r="0.62" opacity="1.00"/><circle cx="546.7" cy="152.6" r="0.78" opacity="0.68"/><circle cx="555.0" cy="155.3" r="0.50" opacity="0.98"/><circle cx="547.1" cy="160.0" r="0.55" opacity="0.87"/><circle cx="554.4" cy="156.0" r="0.47" opacity="0.93"/><circle cx="555.8" cy="155.3" r="0.52" opacity="0.78"/><circle cx="543.0" cy="152.7" r="0.46" opacity="0.70"/><circle cx="555.3" cy="160.8" r="0.47" opacity="0.65"/><circle cx="543.2" cy="154.4" r="0.80" opacity="0.62"/><circle cx="549.8" cy="158.6" r="0.66" opacity="0.78"/><circle cx="542.9" cy="159.5" r="0.70" opacity="0.94"/><circle cx="553.5" cy="154.1" r="0.82" opacity="0.76"/><circle cx="556.9" cy="157.8" r="0.45" opacity="0.61"/><circle cx="548.3" cy="159.5" r="0.84" opacity="0.95"/><circle cx="544.2" cy="158.1" r="0.78" opacity="0.92"/><circle cx="546.1" cy="150.5" r="0.45" opacity="0.70"/><circle cx="546.0" cy="150.0" r="0.76" opacity="0.96"/><circle cx="552.9" cy="154.4" r="0.43" opacity="0.96"/><circle cx="546.3" cy="153.8" r="0.71" opacity="0.70"/><circle cx="549.8" cy="160.2" r="0.64" opacity="0.87"/><circle cx="555.7" cy="158.4" r="0.68" opacity="0.79"/><circle cx="546.0" cy="148.8" r="0.40" opacity="0.79"/><circle cx="546.4" cy="149.1" r="0.69" opacity="0.67"/><circle cx="556.4" cy="153.4" r="0.50" opacity="0.77"/><circle cx="553.0" cy="154.3" r="0.58" opacity="0.98"/><circle cx="552.6" cy="153.0" r="0.73" opacity="0.74"/><circle cx="545.7" cy="149.1" r="0.46" opacity="0.69"/><circle cx="550.3" cy="159.4" r="0.42" opacity="0.65"/><circle cx="545.0" cy="158.2" r="0.44" opacity="0.83"/><circle cx="555.2" cy="153.1" r="0.56" opacity="0.88"/><circle cx="546.3" cy="156.6" r="0.62" opacity="0.61"/><circle cx="547.9" cy="152.3" r="0.57" opacity="0.98"/><circle cx="550.2" cy="147.8" r="0.69" opacity="0.85"/><circle cx="547.2" cy="147.5" r="0.49" opacity="0.91"/><circle cx="548.1" cy="159.2" r="0.77" opacity="0.84"/><circle cx="553.9" cy="149.1" r="0.66" opacity="0.68"/><circle cx="555.4" cy="155.8" r="0.73" opacity="0.71"/><circle cx="549.9" cy="155.5" r="0.48" opacity="0.88"/><circle cx="553.4" cy="155.4" r="0.52" opacity="0.88"/><circle cx="550.6" cy="155.2" r="0.45" opacity="0.97"/><circle cx="552.5" cy="154.7" r="0.55" opacity="0.81"/><circle cx="547.2" cy="160.1" r="0.62" opacity="0.70"/><circle cx="551.7" cy="156.1" r="0.47" opacity="0.64"/><circle cx="544.6" cy="150.5" r="0.52" opacity="0.92"/><circle cx="548.8" cy="150.5" r="0.62" opacity="0.68"/><circle cx="555.0" cy="152.6" r="0.42" opacity="0.66"/><circle cx="547.6" cy="150.5" r="0.72" opacity="0.69"/><circle cx="551.6" cy="148.3" r="0.44" opacity="0.83"/><circle cx="551.9" cy="161.7" r="0.76" opacity="0.92"/><circle cx="549.7" cy="157.8" r="0.70" opacity="0.83"/><circle cx="551.8" cy="158.0" r="0.66" opacity="0.64"/><circle cx="546.7" cy="152.3" r="0.52" opacity="0.77"/><circle cx="542.6" cy="153.8" r="0.41" opacity="0.89"/><circle cx="550.2" cy="159.6" r="0.69" opacity="0.88"/><circle cx="543.6" cy="150.1" r="0.49" opacity="0.72"/><circle cx="547.2" cy="151.7" r="0.47" opacity="0.69"/><circle cx="550.4" cy="147.9" r="0.72" opacity="0.98"/><circle cx="550.7" cy="150.9" r="0.54" opacity="0.89"/><circle cx="555.4" cy="157.5" r="0.44" opacity="0.62"/><circle cx="546.2" cy="155.0" r="0.82" opacity="0.95"/><circle cx="545.9" cy="156.1" r="0.45" opacity="0.80"/><circle cx="544.5" cy="154.6" r="0.72" opacity="0.81"/><circle cx="549.8" cy="152.6" r="0.43" opacity="0.75"/><circle cx="545.3" cy="155.7" r="0.70" opacity="0.69"/><circle cx="547.1" cy="160.4" r="0.72" opacity="0.91"/><circle cx="545.6" cy="159.2" r="0.82" opacity="0.97"/><circle cx="547.5" cy="153.5" r="0.61" opacity="0.85"/><circle cx="549.1" cy="156.8" r="0.84" opacity="0.96"/><circle cx="553.3" cy="159.3" r="0.68" opacity="0.72"/><circle cx="555.9" cy="158.2" r="0.75" opacity="0.77"/><circle cx="553.8" cy="157.9" r="0.44" opacity="0.99"/><circle cx="553.6" cy="156.7" r="0.75" opacity="0.65"/><circle cx="551.1" cy="156.6" r="0.47" opacity="0.81"/><circle cx="551.1" cy="152.4" r="0.48" opacity="0.91"/><circle cx="545.2" cy="157.4" r="0.46" opacity="0.70"/><circle cx="552.2" cy="154.8" r="0.52" opacity="0.90"/></g><circle cx="569.475" cy="155.275" r="8.2" fill="#000" opacity="0.8"/><g fill="#fff"><circle cx="571.9" cy="154.7" r="0.49" opacity="0.98"/><circle cx="564.9" cy="156.3" r="0.49" opacity="0.86"/><circle cx="567.3" cy="156.1" r="0.38" opacity="0.98"/><circle cx="571.7" cy="161.6" r="0.44" opacity="0.62"/><circle cx="567.3" cy="162.4" r="0.70" opacity="0.57"/><circle cx="569.6" cy="155.6" r="0.37" opacity="0.87"/><circle cx="566.1" cy="160.5" r="0.47" opacity="0.91"/><circle cx="570.4" cy="154.8" r="0.30" opacity="0.88"/><circle cx="563.0" cy="154.7" r="0.68" opacity="0.66"/><circle cx="570.6" cy="153.9" r="0.41" opacity="0.68"/><circle cx="565.0" cy="160.8" r="0.45" opacity="0.56"/><circle cx="568.3" cy="163.9" r="0.46" opacity="0.82"/><circle cx="571.4" cy="154.9" r="0.40" opacity="0.96"/><circle cx="569.5" cy="152.6" r="0.59" opacity="0.88"/><circle cx="568.6" cy="155.5" r="0.56" opacity="0.69"/><circle cx="568.6" cy="156.4" r="0.52" opacity="0.67"/><circle cx="569.0" cy="155.1" r="0.64" opacity="0.92"/><circle cx="569.1" cy="156.7" r="0.68" opacity="0.87"/><circle cx="565.3" cy="153.9" r="0.32" opacity="0.94"/><circle cx="563.6" cy="157.1" r="0.44" opacity="0.89"/><circle cx="568.6" cy="152.8" r="0.39" opacity="0.67"/><circle cx="567.5" cy="160.2" r="0.43" opacity="0.51"/><circle cx="568.3" cy="155.5" r="0.33" opacity="0.53"/><circle cx="567.3" cy="155.6" r="0.48" opacity="0.70"/><circle cx="569.4" cy="152.7" r="0.42" opacity="0.82"/><circle cx="570.7" cy="155.7" r="0.66" opacity="0.87"/><circle cx="565.4" cy="163.5" r="0.53" opacity="0.55"/><circle cx="562.8" cy="155.4" r="0.51" opacity="0.74"/><circle cx="562.6" cy="161.1" r="0.57" opacity="0.60"/><circle cx="565.1" cy="161.0" r="0.68" opacity="0.85"/><circle cx="571.5" cy="162.3" r="0.31" opacity="0.80"/><circle cx="562.8" cy="160.4" r="0.47" opacity="0.55"/><circle cx="562.1" cy="157.5" r="0.62" opacity="0.68"/><circle cx="568.4" cy="163.4" r="0.62" opacity="0.61"/><circle cx="571.9" cy="154.3" r="0.47" opacity="0.69"/><circle cx="566.0" cy="152.7" r="0.38" opacity="0.65"/><circle cx="565.0" cy="162.8" r="0.37" opacity="0.77"/><circle cx="562.6" cy="158.3" r="0.36" opacity="0.98"/><circle cx="572.0" cy="158.3" r="0.62" opacity="0.59"/><circle cx="571.2" cy="155.9" r="0.60" opacity="0.93"/><circle cx="563.8" cy="162.7" r="0.38" opacity="0.51"/><circle cx="561.8" cy="158.2" r="0.66" opacity="0.98"/><circle cx="561.7" cy="157.9" r="0.52" opacity="0.57"/><circle cx="563.8" cy="154.3" r="0.47" opacity="0.80"/><circle cx="567.3" cy="161.4" r="0.47" opacity="0.76"/><circle cx="565.7" cy="158.6" r="0.30" opacity="0.67"/><circle cx="566.4" cy="153.2" r="0.39" opacity="0.63"/><circle cx="565.0" cy="158.0" r="0.54" opacity="0.95"/><circle cx="568.8" cy="162.7" r="0.59" opacity="0.87"/><circle cx="566.3" cy="153.4" r="0.41" opacity="0.92"/><circle cx="568.7" cy="157.7" r="0.68" opacity="0.72"/><circle cx="568.8" cy="159.1" r="0.62" opacity="0.84"/><circle cx="570.0" cy="161.4" r="0.56" opacity="1.00"/><circle cx="564.8" cy="162.8" r="0.40" opacity="0.60"/><circle cx="569.5" cy="161.5" r="0.55" opacity="0.65"/><circle cx="568.9" cy="160.7" r="0.33" opacity="0.60"/><circle cx="565.8" cy="162.2" r="0.37" opacity="0.74"/><circle cx="562.0" cy="160.5" r="0.49" opacity="0.97"/><circle cx="564.8" cy="158.8" r="0.54" opacity="0.57"/><circle cx="568.3" cy="159.7" r="0.58" opacity="0.98"/></g><ellipse cx="490.775" cy="174.825" rx="7.5" ry="4.3" fill="#000" opacity="0.45"/><g fill="#000"><circle cx="488.2" cy="175.9" r="0.57" opacity="0.74"/><circle cx="489.5" cy="173.0" r="0.46" opacity="0.95"/><circle cx="490.4" cy="174.7" r="0.74" opacity="0.89"/><circle cx="487.9" cy="177.0" r="0.77" opacity="0.76"/><circle cx="488.2" cy="175.5" r="0.62" opacity="0.87"/><circle cx="490.0" cy="170.1" r="0.46" opacity="0.75"/><circle cx="494.3" cy="172.1" r="0.64" opacity="0.87"/><circle cx="486.4" cy="178.8" r="0.62" opacity="0.76"/><circle cx="491.5" cy="175.7" r="0.76" opacity="0.92"/><circle cx="493.7" cy="175.1" r="0.59" opacity="0.80"/><circle cx="486.1" cy="177.9" r="0.54" opacity="0.81"/><circle cx="495.1" cy="173.6" r="0.59" opacity="0.73"/><circle cx="487.3" cy="176.6" r="0.71" opacity="0.70"/><circle cx="488.5" cy="176.2" r="0.55" opacity="0.97"/><circle cx="488.1" cy="174.4" r="0.53" opacity="0.93"/><circle cx="493.5" cy="177.3" r="0.41" opacity="0.68"/><circle cx="496.5" cy="176.1" r="0.46" opacity="0.69"/><circle cx="493.2" cy="175.4" r="0.69" opacity="0.89"/><circle cx="497.7" cy="172.3" r="0.62" opacity="0.97"/><circle cx="497.3" cy="177.2" r="0.57" opacity="0.68"/><circle cx="490.7" cy="171.0" r="0.55" opacity="0.64"/><circle cx="494.7" cy="172.5" r="0.64" opacity="0.99"/><circle cx="491.9" cy="175.0" r="0.45" opacity="0.61"/><circle cx="489.5" cy="172.2" r="0.44" opacity="0.66"/><circle cx="492.7" cy="177.2" r="0.67" opacity="0.99"/><circle cx="487.7" cy="175.6" r="0.50" opacity="0.69"/><circle cx="490.2" cy="173.7" r="0.47" opacity="0.66"/><circle cx="487.5" cy="177.4" r="0.42" opacity="0.81"/><circle cx="490.4" cy="174.4" r="0.58" opacity="0.92"/><circle cx="487.5" cy="173.9" r="0.75" opacity="0.84"/><circle cx="489.0" cy="176.5" r="0.78" opacity="0.94"/><circle cx="494.5" cy="173.6" r="0.46" opacity="0.67"/><circle cx="486.9" cy="176.8" r="0.40" opacity="0.92"/><circle cx="491.7" cy="172.6" r="0.40" opacity="0.92"/><circle cx="486.5" cy="176.3" r="0.63" opacity="0.89"/><circle cx="498.2" cy="173.6" r="0.65" opacity="0.73"/><circle cx="488.9" cy="175.9" r="0.76" opacity="0.92"/><circle cx="492.3" cy="171.3" r="0.80" opacity="0.88"/><circle cx="488.4" cy="177.8" r="0.50" opacity="0.84"/><circle cx="494.4" cy="178.0" r="0.60" opacity="0.71"/><circle cx="492.0" cy="174.4" r="0.77" opacity="0.90"/><circle cx="494.2" cy="177.5" r="0.63" opacity="0.96"/><circle cx="487.7" cy="173.8" r="0.77" opacity="0.63"/><circle cx="491.0" cy="173.9" r="0.51" opacity="0.65"/><circle cx="493.3" cy="173.3" r="0.69" opacity="0.70"/><circle cx="490.2" cy="172.0" r="0.44" opacity="0.80"/><circle cx="490.4" cy="173.5" r="0.66" opacity="0.71"/><circle cx="485.6" cy="178.0" r="0.78" opacity="1.00"/><circle cx="486.8" cy="175.9" r="0.72" opacity="0.90"/><circle cx="484.3" cy="175.9" r="0.56" opacity="0.98"/><circle cx="489.1" cy="175.0" r="0.70" opacity="0.66"/><circle cx="490.3" cy="174.2" r="0.80" opacity="0.82"/><circle cx="490.7" cy="173.8" r="0.65" opacity="0.75"/><circle cx="490.8" cy="178.4" r="0.41" opacity="0.79"/><circle cx="496.4" cy="176.8" r="0.76" opacity="0.61"/><circle cx="487.1" cy="175.3" r="0.69" opacity="0.89"/><circle cx="486.4" cy="178.6" r="0.47" opacity="0.65"/><circle cx="491.4" cy="173.9" r="0.47" opacity="0.80"/><circle cx="489.7" cy="175.8" r="0.77" opacity="0.79"/><circle cx="491.3" cy="173.4" r="0.77" opacity="0.69"/><circle cx="494.6" cy="173.3" r="0.79" opacity="0.91"/><circle cx="487.9" cy="173.1" r="0.74" opacity="0.78"/><circle cx="496.9" cy="177.3" r="0.72" opacity="0.87"/><circle cx="490.7" cy="173.4" r="0.59" opacity="0.93"/><circle cx="498.2" cy="173.8" r="0.46" opacity="0.87"/><circle cx="487.5" cy="174.2" r="0.47" opacity="0.65"/><circle cx="486.9" cy="175.2" r="0.51" opacity="0.75"/><circle cx="485.4" cy="173.7" r="0.64" opacity="0.66"/><circle cx="493.2" cy="173.6" r="0.78" opacity="0.99"/><circle cx="493.6" cy="176.8" r="0.79" opacity="0.75"/><circle cx="488.0" cy="174.3" r="0.41" opacity="0.68"/><circle cx="492.7" cy="175.9" r="0.65" opacity="0.83"/><circle cx="495.6" cy="173.9" r="0.54" opacity="0.98"/><circle cx="488.0" cy="173.0" r="0.75" opacity="0.87"/><circle cx="487.8" cy="176.9" r="0.52" opacity="0.99"/><circle cx="491.2" cy="174.9" r="0.62" opacity="0.68"/><circle cx="489.1" cy="174.8" r="0.73" opacity="0.87"/><circle cx="487.7" cy="170.8" r="0.80" opacity="0.87"/><circle cx="490.7" cy="174.7" r="0.42" opacity="0.77"/><circle cx="493.6" cy="174.5" r="0.63" opacity="0.60"/><circle cx="484.5" cy="176.9" r="0.64" opacity="0.93"/><circle cx="493.0" cy="174.9" r="0.47" opacity="0.93"/><circle cx="497.1" cy="177.5" r="0.51" opacity="0.95"/><circle cx="487.8" cy="174.7" r="0.79" opacity="0.76"/><circle cx="490.4" cy="174.1" r="0.73" opacity="0.99"/><circle cx="495.1" cy="176.9" r="0.51" opacity="0.66"/></g><rect x="502.825" y="170.325" width="14.5" height="8" fill="#000" opacity="0.38"/><g fill="#222"><rect x="502.6" y="170.3" width="14.0" height="0.6" opacity="0.68"/><rect x="503.8" y="171.3" width="15.0" height="0.6" opacity="0.51"/><rect x="503.1" y="172.3" width="12.5" height="0.6" opacity="0.56"/><rect x="502.9" y="173.3" width="13.1" height="0.6" opacity="0.65"/><rect x="502.3" y="174.3" width="12.4" height="0.6" opacity="0.28"/><rect x="502.1" y="175.3" width="13.8" height="0.6" opacity="0.60"/><rect x="502.1" y="176.3" width="13.5" height="0.6" opacity="0.49"/><rect x="502.9" y="177.3" width="13.2" height="0.6" opacity="0.47"/></g><path d="M527.875 167.825 l-1 14 M524.875 177.825 l9 -2 M530.875 168.825 l2 12 M525.875 172.825 l8 1 M526.875 180.825 h7" stroke="#777" stroke-width="0.5" fill="none"/><path d="M543.425 169.825 l5 6 l5 -4 M545.425 179.825 l3 -6 l6 2 M543.425 175.825 l11 -2 M547.425 168.825 l3 11" stroke="#444" stroke-width="0.6" fill="none"/><g fill="#000"><circle cx="551.1" cy="175.0" r="0.38" opacity="0.59"/><circle cx="549.6" cy="171.4" r="0.46" opacity="0.60"/><circle cx="553.5" cy="177.5" r="0.38" opacity="0.63"/><circle cx="549.7" cy="171.5" r="0.43" opacity="0.83"/><circle cx="544.7" cy="176.3" r="0.48" opacity="0.74"/><circle cx="550.2" cy="176.5" r="0.32" opacity="0.63"/><circle cx="554.2" cy="177.8" r="0.38" opacity="0.62"/><circle cx="542.7" cy="174.3" r="0.35" opacity="0.56"/><circle cx="548.1" cy="178.6" r="0.48" opacity="0.78"/><circle cx="546.9" cy="176.1" r="0.31" opacity="0.55"/><circle cx="552.7" cy="170.2" r="0.33" opacity="0.75"/><circle cx="554.1" cy="176.6" r="0.37" opacity="0.54"/></g><path d="M561.975 170.825 l5 7 l4 -8 l3 9 M562.975 178.825 h13 M566.975 172.825 l8 3 M570.975 169.825 v9" stroke="#444" stroke-width="0.6" fill="none"/><g fill="#000" opacity="0.6"><circle cx="490.5" cy="187.7" r="0.50" opacity="0.48"/><circle cx="489.2" cy="188.2" r="0.56" opacity="0.45"/><circle cx="491.0" cy="188.8" r="0.39" opacity="0.60"/><circle cx="491.2" cy="189.2" r="0.57" opacity="0.90"/><circle cx="489.5" cy="189.4" r="0.57" opacity="0.51"/><circle cx="486.9" cy="189.5" r="0.47" opacity="0.48"/><circle cx="494.3" cy="189.3" r="0.70" opacity="0.86"/><circle cx="493.8" cy="189.4" r="0.50" opacity="0.50"/><circle cx="489.0" cy="188.1" r="0.62" opacity="0.55"/><circle cx="496.1" cy="188.3" r="0.49" opacity="0.47"/><circle cx="489.1" cy="188.9" r="0.57" opacity="0.75"/><circle cx="495.6" cy="189.2" r="0.62" opacity="0.46"/><circle cx="490.3" cy="189.1" r="0.53" opacity="0.76"/><circle cx="488.0" cy="189.8" r="0.45" opacity="0.76"/></g><g fill="#000" opacity="0.6"><circle cx="529.6" cy="188.9" r="0.34" opacity="0.76"/><circle cx="532.8" cy="188.1" r="0.36" opacity="0.84"/><circle cx="529.6" cy="188.5" r="0.45" opacity="0.74"/><circle cx="530.8" cy="188.9" r="0.44" opacity="0.84"/><circle cx="532.6" cy="188.9" r="0.66" opacity="0.79"/><circle cx="532.7" cy="188.2" r="0.69" opacity="0.72"/><circle cx="533.7" cy="188.6" r="0.38" opacity="0.66"/><circle cx="527.0" cy="188.9" r="0.45" opacity="0.66"/><circle cx="528.0" cy="188.6" r="0.41" opacity="0.65"/><circle cx="526.6" cy="188.9" r="0.57" opacity="0.49"/><circle cx="527.4" cy="188.8" r="0.61" opacity="0.75"/><circle cx="530.6" cy="188.0" r="0.40" opacity="0.86"/><circle cx="526.8" cy="188.8" r="0.42" opacity="0.60"/><circle cx="528.4" cy="187.6" r="0.49" opacity="0.77"/><circle cx="530.7" cy="189.6" r="0.44" opacity="0.55"/><circle cx="526.5" cy="189.8" r="0.59" opacity="0.50"/></g><g fill="#000" opacity="0.6"><circle cx="550.0" cy="190.1" r="0.56" opacity="0.74"/><circle cx="546.2" cy="188.0" r="0.41" opacity="0.43"/><circle cx="548.9" cy="189.0" r="0.68" opacity="0.66"/><circle cx="550.2" cy="188.4" r="0.43" opacity="0.45"/><circle cx="550.9" cy="187.7" r="0.50" opacity="0.58"/><circle cx="549.0" cy="189.7" r="0.58" opacity="0.85"/><circle cx="553.1" cy="187.7" r="0.48" opacity="0.61"/><circle cx="550.2" cy="189.3" r="0.41" opacity="0.86"/><circle cx="551.1" cy="188.4" r="0.64" opacity="0.85"/><circle cx="547.6" cy="189.1" r="0.61" opacity="0.59"/><circle cx="554.4" cy="189.9" r="0.48" opacity="0.60"/><circle cx="547.4" cy="188.6" r="0.31" opacity="0.60"/><circle cx="549.1" cy="188.9" r="0.45" opacity="0.78"/><circle cx="547.1" cy="189.8" r="0.55" opacity="0.49"/></g><g fill="#000" opacity="0.6"><circle cx="573.7" cy="189.0" r="0.54" opacity="0.55"/><circle cx="570.9" cy="190.2" r="0.66" opacity="0.52"/><circle cx="565.4" cy="188.4" r="0.43" opacity="0.42"/><circle cx="566.9" cy="189.8" r="0.54" opacity="0.66"/><circle cx="570.5" cy="189.2" r="0.42" opacity="0.61"/><circle cx="564.5" cy="190.1" r="0.35" opacity="0.89"/><circle cx="569.4" cy="190.3" r="0.40" opacity="0.69"/><circle cx="568.3" cy="189.0" r="0.62" opacity="0.81"/><circle cx="568.3" cy="190.1" r="0.49" opacity="0.89"/><circle cx="571.9" cy="189.1" r="0.39" opacity="0.71"/><circle cx="570.0" cy="187.5" r="0.52" opacity="0.59"/><circle cx="569.4" cy="188.6" r="0.40" opacity="0.78"/><circle cx="571.9" cy="189.3" r="0.39" opacity="0.40"/><circle cx="570.1" cy="189.0" r="0.45" opacity="0.62"/><circle cx="566.4" cy="188.8" r="0.58" opacity="0.66"/></g><path d="M535.8 84.4 h2.6 M537.0 83.1 v2.6" stroke="#1e2a78" stroke-width="0.9"/><path d="M555.3 84.4 h2.6 M556.6 83.1 v2.6" stroke="#1e2a78" stroke-width="0.9"/><path d="M574.9 84.4 h2.6 M576.1 83.1 v2.6" stroke="#222" stroke-width="0.9"/><path d="M496.6 104.0 h2.6 M497.9 102.7 v2.6" stroke="#1e2a78" stroke-width="0.9"/><path d="M516.2 104.0 h2.6 M517.5 102.7 v2.6" stroke="#1e2a78" stroke-width="0.9"/><path d="M535.8 104.0 h2.6 M537.0 102.7 v2.6" stroke="#1e2a78" stroke-width="0.9"/><path d="M555.3 104.0 h2.6 M556.6 102.7 v2.6" stroke="#1e2a78" stroke-width="0.9"/><path d="M574.9 104.0 h2.6 M576.1 102.7 v2.6" stroke="#1e2a78" stroke-width="0.9"/><path d="M496.6 123.5 h2.6 M497.9 122.2 v2.6" stroke="#1e2a78" stroke-width="0.9"/><path d="M516.2 123.5 h2.6 M517.5 122.2 v2.6" stroke="#962626" stroke-width="0.9"/><path d="M535.8 123.5 h2.6 M537.0 122.2 v2.6" stroke="#962626" stroke-width="0.9"/><path d="M555.3 123.5 h2.6 M556.6 122.2 v2.6" stroke="#962626" stroke-width="0.9"/><path d="M574.9 123.5 h2.6 M576.1 122.2 v2.6" stroke="#962626" stroke-width="0.9"/><path d="M496.6 143.1 h2.6 M497.9 141.8 v2.6" stroke="#962626" stroke-width="0.9"/><path d="M516.2 143.1 h2.6 M517.5 141.8 v2.6" stroke="#e04040" stroke-width="0.9"/><path d="M535.8 143.1 h2.6 M537.0 141.8 v2.6" stroke="#222" stroke-width="0.9"/><path d="M555.3 143.1 h2.6 M556.6 141.8 v2.6" stroke="#962626" stroke-width="0.9"/><path d="M574.9 143.1 h2.6 M576.1 141.8 v2.6" stroke="#962626" stroke-width="0.9"/><path d="M496.6 162.7 h2.6 M497.9 161.3 v2.6" stroke="#962626" stroke-width="0.9"/><path d="M516.2 162.7 h2.6 M517.5 161.3 v2.6" stroke="#962626" stroke-width="0.9"/><path d="M535.8 162.7 h2.6 M537.0 161.3 v2.6" stroke="#962626" stroke-width="0.9"/><path d="M555.3 162.7 h2.6 M556.6 161.3 v2.6" stroke="#962626" stroke-width="0.9"/><path d="M574.9 162.7 h2.6 M576.1 161.3 v2.6" stroke="#962626" stroke-width="0.9"/><path d="M496.6 182.2 h2.6 M497.9 180.9 v2.6" stroke="#962626" stroke-width="0.9"/><path d="M516.2 182.2 h2.6 M517.5 180.9 v2.6" stroke="#962626" stroke-width="0.9"/><path d="M535.8 182.2 h2.6 M537.0 180.9 v2.6" stroke="#962626" stroke-width="0.9"/><path d="M555.3 182.2 h2.6 M556.6 180.9 v2.6" stroke="#962626" stroke-width="0.9"/><path d="M574.9 182.2 h2.6 M576.1 180.9 v2.6" stroke="#962626" stroke-width="0.9"/></svg>
<div style="left:480px;top:189.5px;width:114px;height:40px;background:#454545;"></div>
<div style="left:579.3px;top:67.3px;width:13.5px;height:122.2px;background:#3b3b3b;"></div>
<div style="left:586.3px;top:68px;width:6.3px;height:61px;background:#606060;border-radius:1px;"></div>
<div style="left:480px;top:190.3px;width:112.7px;height:10px;background:#1d1d1d;"></div>
<div class="t" style="left:482.4px;top:190.70px;font-size:7px;line-height:9.80px;color:#e8e8e8;font-weight:400;white-space:nowrap;transform:scaleX(1.049);transform-origin:left center;">Basic.</div>
<svg style="left:583px;top:193px;" width="8" height="6" viewBox="0 0 8 6"><path d="M1 1.5 L4 4.5 L7 1.5" fill="none" stroke="#e8e8e8" stroke-width="1.3"/></svg>
<div style="left:480px;top:201.3px;width:113px;height:9.9px;background:#2d2d2d;border:1px solid #5c5c5c;box-sizing:border-box;"></div>
<div style="left:480.8px;top:202.1px;width:13px;height:8.1px;background:#5a5a5a;"></div>
<div class="t" style="left:481px;top:201.20px;font-size:7px;line-height:9.80px;color:#f0f0f0;font-weight:400;white-space:nowrap;transform:scaleX(0.929);transform-origin:left center;">間隔</div>
<div class="t" style="right:14px;top:201.60px;font-size:7px;line-height:9.80px;color:#ececec;font-weight:400;white-space:nowrap;transform:scaleX(1.072);transform-origin:right center;">10.0</div>
<svg style="left:586.4px;top:202.6px;" width="6" height="7.9" viewBox="0 0 6 7.9"><path d="M0.7 3.1 L3 0.9 L5.3 3.1 M0.7 4.8 L3 7 L5.3 4.8" fill="none" stroke="#e0e0e0" stroke-width="1.25"/></svg>
<svg style="left:484px;top:213.5px;" width="11" height="10" viewBox="0 0 11 10"><path d="M0.8 2 H6 M0.8 5 H4.5 M0.8 8 H5" stroke="#e0e0e0" stroke-width="1.2"/><path d="M4.8 7.8 L5.4 5.6 L9.4 1.2 L10.6 2.3 L6.6 6.8Z" fill="#e0e0e0"/></svg>
<svg style="left:504px;top:213.5px;" width="9" height="10" viewBox="0 0 9 10"><path d="M2 2.5 H7.5 V9 H2Z" fill="none" stroke="#dcdcdc" stroke-width="1"/><path d="M4.5 0.5 V3.5 M3 2 H6" stroke="#dcdcdc" stroke-width="1"/></svg>
<svg style="left:523px;top:214px;" width="10" height="9" viewBox="0 0 10 9"><rect x="0.8" y="1" width="5.5" height="4" fill="none" stroke="#8a8a8a" stroke-width="1"/><rect x="3.5" y="4" width="5.5" height="4" fill="#454545" stroke="#8a8a8a" stroke-width="1"/></svg>
<svg style="left:540.5px;top:213.5px;" width="9.5" height="9.5" viewBox="0 0 9.5 9.5"><rect x="0.5" y="0.5" width="8.5" height="8.5" fill="#e0e0e0"/><path d="M2.7 2.7 L6.8 6.8 M6.8 2.7 L2.7 6.8" stroke="#333" stroke-width="1.3"/></svg>
<svg style="left:559px;top:213.5px;" width="9" height="9" viewBox="0 0 9 9"><path d="M6.8 2.6 A3 3 0 1 0 7.4 5.6" fill="none" stroke="#dcdcdc" stroke-width="1.2"/><path d="M8.4 1 L5.2 1.4 L7.2 4Z" fill="#dcdcdc"/></svg>
<svg style="left:578.5px;top:213.5px;" width="10" height="10" viewBox="0 0 10 10"><path d="M3 5.5 V1 H6.2 L7.8 2.6 V5.5" fill="none" stroke="#dcdcdc" stroke-width="1"/><path d="M1 6 H9 V9 H1Z" fill="#dcdcdc"/><path d="M2.5 7.5 H7.5" stroke="#444" stroke-width="0.8"/></svg>
<div style="left:531.5px;top:226.2px;width:1.8px;height:1.3px;background:#9a9a9a;"></div>
<div style="left:536.2px;top:226.2px;width:1.8px;height:1.3px;background:#9a9a9a;"></div>
<div style="left:541px;top:226.2px;width:1.8px;height:1.3px;background:#9a9a9a;"></div>
<div style="left:490px;top:230px;width:22.5px;height:10.5px;background:#2c2c2c;"></div>
<svg style="left:481px;top:231px;" width="8.5" height="9" viewBox="0 0 8.5 9"><path d="M0.8 2 H7.7 M0.8 4.5 H7.7 M0.8 7 H7.7" stroke="#e8e8e8" stroke-width="1.6"/></svg>
<svg style="left:491.5px;top:231.5px;" width="8.5" height="8.5" viewBox="0 0 8.5 8.5"><rect x="0.6" y="0.6" width="7.3" height="7.3" fill="none" stroke="#b8b8b8" stroke-width="0.9"/><path d="M3 0.6 V8 M5.5 0.6 V8 M0.6 4.2 H8" stroke="#8a8a8a" stroke-width="0.7"/></svg>
<svg style="left:502px;top:232px;" width="9" height="8" viewBox="0 0 9 8"><path d="M1 1.5 Q4.5 3.5 8 1.5 M1.5 6.5 L4 3 M7.5 6.5 L5 3" fill="none" stroke="#e0e0e0" stroke-width="1.1"/><rect x="0.5" y="0.8" width="1.6" height="1.6" fill="#e8e8e8"/><rect x="6.9" y="0.8" width="1.6" height="1.6" fill="#e8e8e8"/></svg>
<svg style="left:585.5px;top:231.5px;" width="7" height="7" viewBox="0 0 7 7"><rect x="0.5" y="0.5" width="6" height="6" fill="#5a5a5a" stroke="#bdbdbd" stroke-width="0.8"/><path d="M4.5 1.8 V5.2 L2 3.5Z" fill="#eee"/></svg>
<div style="left:480px;top:242.5px;width:86.5px;height:14.5px;background:#2b2b2b;border-radius:1.5px;"></div>
<div class="t" style="left:484px;top:245.10px;font-size:7px;line-height:9.80px;color:#dcdcdc;font-weight:400;white-space:nowrap;transform:scaleX(0.933);transform-origin:left center;">モード</div>
<div class="t" style="left:539.3px;top:245.10px;font-size:7px;line-height:9.80px;color:#e0e0e0;font-weight:400;white-space:nowrap;transform:scaleX(0.929);transform-origin:left center;">標準</div>
<svg style="left:556px;top:247px;" width="8" height="6" viewBox="0 0 8 6"><path d="M1 1.5 L4 4.5 L7 1.5" fill="none" stroke="#e8e8e8" stroke-width="1.3"/></svg>
<div style="left:568.7px;top:242.5px;width:24.3px;height:14.5px;background:#2b2b2b;border-radius:1.5px;"></div>
<svg style="left:571.5px;top:246px;" width="8" height="8" viewBox="0 0 8 8"><path d="M2.2 2.2 A3 3 0 1 1 1.6 5.2" fill="none" stroke="#d4d4d4" stroke-width="1.1"/><path d="M0.6 1 L3.6 1.2 L1.8 3.8Z" fill="#d4d4d4"/></svg>
<svg style="left:582.5px;top:247px;" width="8" height="6" viewBox="0 0 8 6"><path d="M1 1.5 L4 4.5 L7 1.5" fill="none" stroke="#e8e8e8" stroke-width="1.3"/></svg>
<div style="left:480px;top:259px;width:113px;height:8.8px;background:#303030;border:1px solid #5c5c5c;box-sizing:border-box;"></div>
<div style="left:480.8px;top:259.8px;width:105px;height:7.2px;background:#575757;"></div>
<div class="t" style="left:481px;top:258.30px;font-size:7px;line-height:9.80px;color:#f0f0f0;font-weight:400;white-space:nowrap;transform:scaleX(0.964);transform-origin:left center;">不透明度</div>
<div class="t" style="right:14px;top:258.50px;font-size:7px;line-height:9.80px;color:#ececec;font-weight:400;white-space:nowrap;transform:scaleX(1.055);transform-origin:right center;">100.0</div>
<svg style="left:586.5px;top:260.5px;" width="6" height="6.5" viewBox="0 0 6 6.5"><path d="M0.8 2.2 L3 4.8 L5.2 2.2" fill="none" stroke="#dcdcdc" stroke-width="1"/></svg>
<div class="t" style="left:481px;top:270.90px;font-size:7px;line-height:9.80px;color:#e4e4e4;font-weight:400;white-space:nowrap;transform:scaleX(0.846);transform-origin:left center;">保護:</div>
<svg style="left:501.5px;top:271.5px;" width="8" height="8" viewBox="0 0 8 8"><path d="M7 0.8 L7.6 1.4 L3 6 L2 5Z M1.8 5.4 L2.8 6.4 L0.8 7.4Z" fill="#dcdcdc" stroke="#dcdcdc" stroke-width="0.4"/></svg>
<svg style="left:513px;top:271.5px;" width="8.5" height="8.5" viewBox="0 0 8.5 8.5"><path d="M4.25 0.5 V8 M0.5 4.25 H8" stroke="#d8d8d8" stroke-width="1"/><path d="M4.25 0 L5.6 1.8 H2.9Z M4.25 8.5 L5.6 6.7 H2.9Z M0 4.25 L1.8 2.9 V5.6Z M8.5 4.25 L6.7 2.9 V5.6Z" fill="#d8d8d8"/></svg>
<svg style="left:526px;top:271.5px;" width="8.5" height="8.5" viewBox="0 0 8.5 8.5"><rect x="0.5" y="0.5" width="1.9" height="1.9" fill="#d0d0d0"/><rect x="0.5" y="2.4" width="1.9" height="1.9" fill="#707070"/><rect x="0.5" y="4.3" width="1.9" height="1.9" fill="#d0d0d0"/><rect x="0.5" y="6.2" width="1.9" height="1.9" fill="#707070"/><rect x="2.4" y="0.5" width="1.9" height="1.9" fill="#707070"/><rect x="2.4" y="2.4" width="1.9" height="1.9" fill="#d0d0d0"/><rect x="2.4" y="4.3" width="1.9" height="1.9" fill="#707070"/><rect x="2.4" y="6.2" width="1.9" height="1.9" fill="#d0d0d0"/><rect x="4.3" y="0.5" width="1.9" height="1.9" fill="#d0d0d0"/><rect x="4.3" y="2.4" width="1.9" height="1.9" fill="#707070"/><rect x="4.3" y="4.3" width="1.9" height="1.9" fill="#d0d0d0"/><rect x="4.3" y="6.2" width="1.9" height="1.9" fill="#707070"/><rect x="6.2" y="0.5" width="1.9" height="1.9" fill="#707070"/><rect x="6.2" y="2.4" width="1.9" height="1.9" fill="#d0d0d0"/><rect x="6.2" y="4.3" width="1.9" height="1.9" fill="#707070"/><rect x="6.2" y="6.2" width="1.9" height="1.9" fill="#d0d0d0"/></svg>
<div style="left:480px;top:282.5px;width:115px;height:162.8px;background:#303030;"></div>
<div style="left:480px;top:282.5px;width:112.8px;height:22.2px;background:#1d1d1d;"></div>
<svg style="left:482.5px;top:289.5px;" width="12" height="9" viewBox="0 0 12 9"><path d="M0.8 4.5 Q6 -1.5 11.2 4.5 Q6 10.5 0.8 4.5Z" fill="none" stroke="#f0f0f0" stroke-width="1.1"/><circle cx="6" cy="4.5" r="1.9" fill="#f0f0f0"/></svg>
<div style="left:524.2px;top:283.3px;width:20.6px;height:20.8px;background:#fff;"></div>
<div style="left:532px;top:288.6px;width:3.6px;height:0.7px;background:#444;"></div>
<div class="t" style="left:547px;top:289.10px;font-size:7px;line-height:9.80px;color:#fff;font-weight:700;white-space:nowrap;transform:scaleX(0.929);transform-origin:left center;">背景</div>
<div style="left:476px;top:445.3px;width:119px;height:15.7px;background:#3a3a3a;"></div>
<svg style="left:482px;top:449px;" width="9" height="9" viewBox="0 0 9 9"><path d="M1.5 2.5 H7.5 V8.5 H1.5Z" fill="none" stroke="#dedede" stroke-width="1"/><path d="M3.5 0.3 V3.6 M2 2 H5" stroke="#dedede" stroke-width="1"/></svg>
<svg style="left:496px;top:449px;" width="9" height="9" viewBox="0 0 9 9"><path d="M1 1 H4 L5 2.2 H8.5 V8.5 H1Z" fill="#dedede"/><path d="M5 3.8 V7.4 M3.2 5.6 H6.8" stroke="#333" stroke-width="0.9"/></svg>
<svg style="left:510px;top:450.5px;" width="9" height="6" viewBox="0 0 9 6"><path d="M1 5 L4.5 1.2 L8 5" fill="none" stroke="#dedede" stroke-width="1.2"/></svg>
<svg style="left:523px;top:450.5px;" width="9" height="6" viewBox="0 0 9 6"><path d="M1 1 L4.5 4.8 L8 1" fill="none" stroke="#dedede" stroke-width="1.2"/></svg>
<svg style="left:536.5px;top:449.5px;" width="10" height="8" viewBox="0 0 10 8"><rect x="0.8" y="0.8" width="5" height="3.6" fill="none" stroke="#8c8c8c" stroke-width="0.9"/><rect x="3.6" y="3.4" width="5.4" height="3.6" fill="#3c3c3c" stroke="#8c8c8c" stroke-width="0.9"/></svg>
<svg style="left:551px;top:449px;" width="9" height="9" viewBox="0 0 9 9"><path d="M1 2 H5 M1 4.5 H5 M1 7 H5" stroke="#dedede" stroke-width="1.2"/><path d="M7 1 V8 M5.6 6.4 L7 8.2 L8.4 6.4" stroke="#dedede" stroke-width="0.9" fill="none"/></svg>
<svg style="left:564.5px;top:448.5px;" width="9.5" height="9.5" viewBox="0 0 9.5 9.5"><path d="M2.5 0.8 H7 V4 H2.5Z" fill="#dedede"/><path d="M1 5 H8.5 V6.8 H1Z M4 6.8 V8 H1.5 V9 H8 V8 H5.5 V6.8Z" fill="#dedede"/></svg>
<svg style="left:581px;top:449px;" width="9.5" height="9.5" viewBox="0 0 9.5 9.5"><rect x="0.5" y="0.5" width="8.5" height="8.5" fill="#e4e4e4"/><path d="M2.7 2.7 L6.8 6.8 M6.8 2.7 L2.7 6.8" stroke="#333" stroke-width="1.4"/></svg>
</body></html>
